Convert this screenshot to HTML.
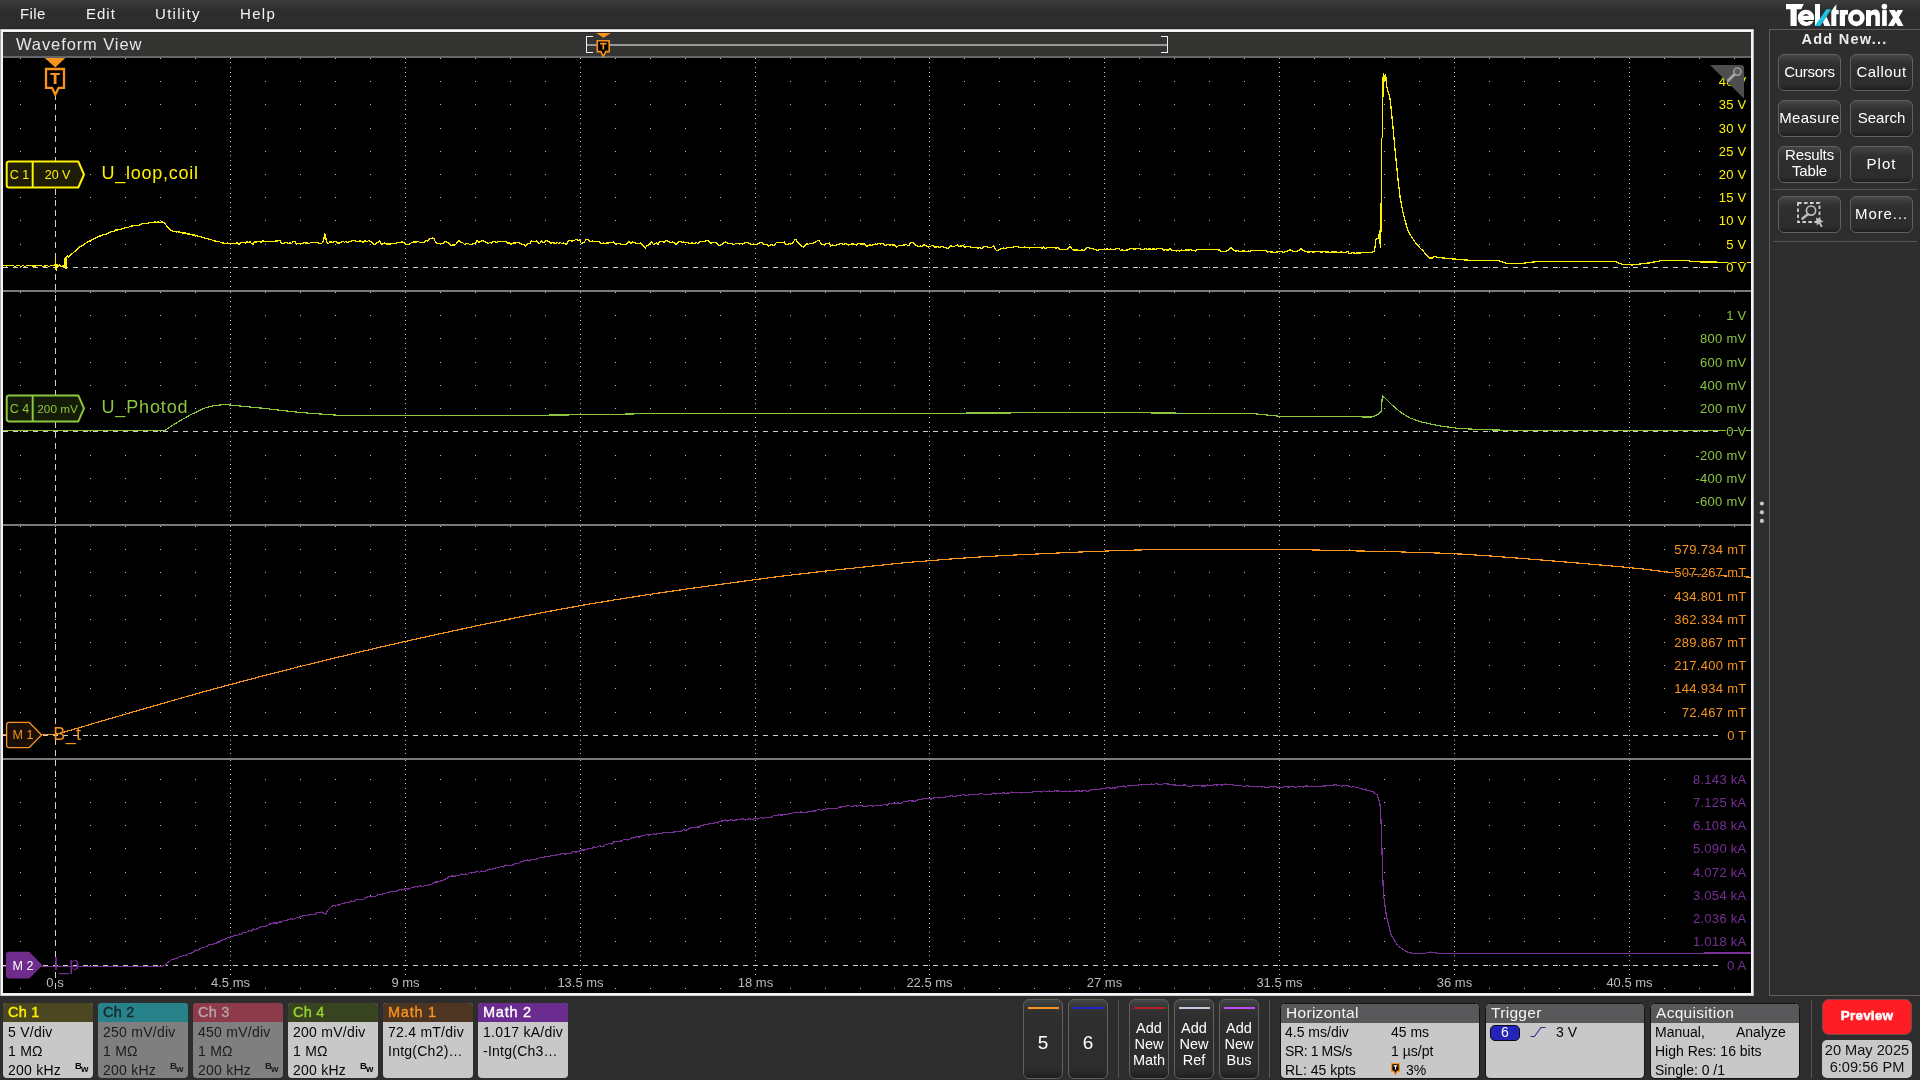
<!DOCTYPE html>
<html><head><meta charset="utf-8"><title>Scope</title>
<style>
html,body{margin:0;padding:0}
body{width:1920px;height:1080px;overflow:hidden;position:relative;background:#2d2d2d;font-family:"Liberation Sans",sans-serif;color:#fff}
.abs{position:absolute}
#menubar{left:0;top:0;width:1920px;height:28px;background:linear-gradient(#3c3c3c 0,#393939 3px,#323232 7px,#2d2d2d 11px,#2d2d2d 100%)}
#menuline{left:0;top:28px;width:1756px;height:1px;background:#232323}
.menu{top:5px;font-size:15px;line-height:18px;letter-spacing:.35px;color:#f4f4f4;white-space:nowrap}
#wvframe{left:0;top:29px;width:1754px;height:967px;background:linear-gradient(#cdcdd1 0,#cdcdd1 1px,#f4f4f6 1px,#f4f4f6 966px,#d4d4d6 966px);box-sizing:border-box;border-left:1px solid #a9a9ad;border-right:1px solid #b4b4b8}
#wvhead{left:3px;top:32px;width:1748px;height:24px;background:#343432;border-top:1px solid #292927;box-sizing:border-box}
#wvline{left:3px;top:56px;width:1748px;height:2px;background:#63666a}
#plot{left:3px;top:58px;width:1748px;height:935px;background:#000}
#wvtitle{left:16px;top:34px;font-size:16.5px;line-height:20px;letter-spacing:.9px;color:#e6e6e6;white-space:nowrap}
#svg{left:0;top:0}
/* right panel */
#rpanel{left:1769px;top:29px;width:160px;height:967px;box-sizing:border-box;border:1px solid #665d56;border-left-color:#5c6064;background:#2e2e2e}
.btn{box-sizing:border-box;border:1px solid #675e58;border-radius:6px;background:linear-gradient(#454647 0,#3b3c3c 10%,#313131 24%,#2e2e2e 40%,#2d2d2d 84%,#262626 93%,#1d1d1d 100%);color:#fff;text-align:center}
.rb{width:63px;height:37px;font-size:15px;line-height:33px;white-space:nowrap}
.sep{height:1px;background:#5b544f}
.vsep{width:1px;background:#5b544f}
/* bottom */
.badge{width:90px;height:75px;top:1003px;border-radius:4px;overflow:hidden;background:#c8c8c8;color:#050505;font-size:14px}
.badge.off{background:#7f7f7f;color:#1c1c1c}
.badge .hd{position:absolute;left:0;top:0;width:100%;height:19px;font-size:14.5px;line-height:18px;text-indent:5px;-webkit-text-stroke:.35px;letter-spacing:.2px}
.badge .r{position:absolute;left:5px;white-space:nowrap;line-height:16px;letter-spacing:.25px}
.r1{top:21px}.r2{top:40px}.r3{top:59px}
.bw{position:absolute;left:72px;top:57.5px;font-size:9.5px;line-height:10px;font-weight:bold;letter-spacing:-.9px;white-space:nowrap}
.bw span{position:relative;top:3.2px;font-size:9.5px}
.info{top:1003px;height:75.5px;box-sizing:border-box;border:1px solid #141414;border-radius:5px;overflow:hidden;background:#c8c8c8;color:#050505;font-size:14px}
.info .hd{position:absolute;left:0;top:0;width:100%;height:19px;background:#58585a;color:#f4f4f4;font-size:15.5px;line-height:18px;text-indent:5px;letter-spacing:.3px}
.info .r{position:absolute;white-space:nowrap;line-height:16px;letter-spacing:0}
.i1{top:20px}.i2{top:39px}.i3{top:58px}
.tall{top:999px;width:40px;height:79.5px;background:linear-gradient(#454647 0,#3b3c3c 5%,#313131 14%,#2e2e2e 24%,#2d2d2d 88%,#262626 95%,#1d1d1d 100%)}
.tall .ln{position:absolute;left:4px;top:7px;width:31px;height:2px}

#root{position:absolute;left:0;top:0;width:1920px;height:1080px;will-change:transform}

</style></head>
<body>
<div id="root">
<div id="menubar" class="abs"></div><div id="menuline" class="abs"></div>
<div class="abs menu" style="left:20px">File</div>
<div class="abs menu" style="left:86px;letter-spacing:1px">Edit</div>
<div class="abs menu" style="left:155px;letter-spacing:1.3px">Utility</div>
<div class="abs menu" style="left:240px;letter-spacing:1.3px">Help</div>
<svg class="abs" style="left:1780px;top:0" width="135" height="29" viewBox="1780 0 135 29">
<g fill="#fff">
<path d="M1786 4H1803.8L1801.2 9.2H1796.7V25.9H1790.5V9.2H1786Z"/>
<circle cx="1806" cy="17.9" r="8.2"/>
<rect x="1815" y="4" width="5" height="21.9"/>
<path d="M1826.4 16.5L1830.5 25.9H1824.4L1822.9 21.9Z"/>
<path d="M1836.3 4.2V10.1H1838.7V14.3H1836.3V25.9H1831.3V11Z"/>
<path d="M1839.8 10.1H1848V14.6H1846.4Q1845 14.6 1845 16V25.9H1839.8Z"/>
<path d="M1866 10H1870.6V11.2Q1872.6 9.6 1875 9.6Q1879.9 9.6 1879.9 15.2V25.9H1875.4V16.6Q1875.4 14.8 1873.2 14.8Q1871 14.8 1871 16.8V25.9H1866Z"/>
<rect x="1882.1" y="10.1" width="4.7" height="15.8"/>
<circle cx="1884.4" cy="6.6" r="2.8"/>
<path d="M1888.9 10.1H1894.9L1903.5 25.9H1897.9Z"/>
<path d="M1897.5 10.1H1903.1L1893.7 25.9H1887.9Z"/>
</g>
<circle cx="1856.35" cy="17.9" r="5.93" fill="none" stroke="#fff" stroke-width="4.75"/>
<path d="M1802.8 15.8Q1806 12.4 1809.2 15.8Z" fill="#262626"/>
<path d="M1803 20.1H1814.4V20.9H1809Q1806 23.2 1803 20.1Z" fill="#262626"/>
<path d="M1814.8 25.9H1820.3L1831 9.3H1826.3Z" fill="#1ec3e6"/>
</svg>
<div id="wvframe" class="abs"></div>
<div id="wvhead" class="abs"></div><div id="wvline" class="abs"></div>
<div id="plot" class="abs"></div>
<div id="wvtitle" class="abs">Waveform View</div>
<div id="rpanel" class="abs"></div>
<svg id="svg" class="abs" width="1920" height="1080" viewBox="0 0 1920 1080" font-family="Liberation Sans, sans-serif">
<defs><clipPath id="cp"><rect x="3" y="58" width="1748" height="935"/></clipPath></defs>
<g clip-path="url(#cp)">
<path d="M20 58.5h1M55 58.5h1M90 58.5h1M125 58.5h1M160 58.5h1M195 58.5h1M265 58.5h1M300 58.5h1M335 58.5h1M370 58.5h1M440 58.5h1M475 58.5h1M510 58.5h1M545 58.5h1M615 58.5h1M650 58.5h1M685 58.5h1M720 58.5h1M790 58.5h1M825 58.5h1M860 58.5h1M894 58.5h1M964 58.5h1M999 58.5h1M1034 58.5h1M1069 58.5h1M1139 58.5h1M1174 58.5h1M1209 58.5h1M1244 58.5h1M1314 58.5h1M1349 58.5h1M1384 58.5h1M1419 58.5h1M1489 58.5h1M1524 58.5h1M1559 58.5h1M1594 58.5h1M1664 58.5h1M1699 58.5h1M1734 58.5h1M20 81.5h1M55 81.5h1M90 81.5h1M125 81.5h1M160 81.5h1M195 81.5h1M265 81.5h1M300 81.5h1M335 81.5h1M370 81.5h1M440 81.5h1M475 81.5h1M510 81.5h1M545 81.5h1M615 81.5h1M650 81.5h1M685 81.5h1M720 81.5h1M790 81.5h1M825 81.5h1M860 81.5h1M894 81.5h1M964 81.5h1M999 81.5h1M1034 81.5h1M1069 81.5h1M1139 81.5h1M1174 81.5h1M1209 81.5h1M1244 81.5h1M1314 81.5h1M1349 81.5h1M1384 81.5h1M1419 81.5h1M1489 81.5h1M1524 81.5h1M1559 81.5h1M1594 81.5h1M1664 81.5h1M1699 81.5h1M1734 81.5h1M20 104.5h1M55 104.5h1M90 104.5h1M125 104.5h1M160 104.5h1M195 104.5h1M265 104.5h1M300 104.5h1M335 104.5h1M370 104.5h1M440 104.5h1M475 104.5h1M510 104.5h1M545 104.5h1M615 104.5h1M650 104.5h1M685 104.5h1M720 104.5h1M790 104.5h1M825 104.5h1M860 104.5h1M894 104.5h1M964 104.5h1M999 104.5h1M1034 104.5h1M1069 104.5h1M1139 104.5h1M1174 104.5h1M1209 104.5h1M1244 104.5h1M1314 104.5h1M1349 104.5h1M1384 104.5h1M1419 104.5h1M1489 104.5h1M1524 104.5h1M1559 104.5h1M1594 104.5h1M1664 104.5h1M1699 104.5h1M1734 104.5h1M20 128.5h1M55 128.5h1M90 128.5h1M125 128.5h1M160 128.5h1M195 128.5h1M265 128.5h1M300 128.5h1M335 128.5h1M370 128.5h1M440 128.5h1M475 128.5h1M510 128.5h1M545 128.5h1M615 128.5h1M650 128.5h1M685 128.5h1M720 128.5h1M790 128.5h1M825 128.5h1M860 128.5h1M894 128.5h1M964 128.5h1M999 128.5h1M1034 128.5h1M1069 128.5h1M1139 128.5h1M1174 128.5h1M1209 128.5h1M1244 128.5h1M1314 128.5h1M1349 128.5h1M1384 128.5h1M1419 128.5h1M1489 128.5h1M1524 128.5h1M1559 128.5h1M1594 128.5h1M1664 128.5h1M1699 128.5h1M1734 128.5h1M20 151.5h1M55 151.5h1M90 151.5h1M125 151.5h1M160 151.5h1M195 151.5h1M265 151.5h1M300 151.5h1M335 151.5h1M370 151.5h1M440 151.5h1M475 151.5h1M510 151.5h1M545 151.5h1M615 151.5h1M650 151.5h1M685 151.5h1M720 151.5h1M790 151.5h1M825 151.5h1M860 151.5h1M894 151.5h1M964 151.5h1M999 151.5h1M1034 151.5h1M1069 151.5h1M1139 151.5h1M1174 151.5h1M1209 151.5h1M1244 151.5h1M1314 151.5h1M1349 151.5h1M1384 151.5h1M1419 151.5h1M1489 151.5h1M1524 151.5h1M1559 151.5h1M1594 151.5h1M1664 151.5h1M1699 151.5h1M1734 151.5h1M20 174.5h1M55 174.5h1M90 174.5h1M125 174.5h1M160 174.5h1M195 174.5h1M265 174.5h1M300 174.5h1M335 174.5h1M370 174.5h1M440 174.5h1M475 174.5h1M510 174.5h1M545 174.5h1M615 174.5h1M650 174.5h1M685 174.5h1M720 174.5h1M790 174.5h1M825 174.5h1M860 174.5h1M894 174.5h1M964 174.5h1M999 174.5h1M1034 174.5h1M1069 174.5h1M1139 174.5h1M1174 174.5h1M1209 174.5h1M1244 174.5h1M1314 174.5h1M1349 174.5h1M1384 174.5h1M1419 174.5h1M1489 174.5h1M1524 174.5h1M1559 174.5h1M1594 174.5h1M1664 174.5h1M1699 174.5h1M1734 174.5h1M20 197.5h1M55 197.5h1M90 197.5h1M125 197.5h1M160 197.5h1M195 197.5h1M265 197.5h1M300 197.5h1M335 197.5h1M370 197.5h1M440 197.5h1M475 197.5h1M510 197.5h1M545 197.5h1M615 197.5h1M650 197.5h1M685 197.5h1M720 197.5h1M790 197.5h1M825 197.5h1M860 197.5h1M894 197.5h1M964 197.5h1M999 197.5h1M1034 197.5h1M1069 197.5h1M1139 197.5h1M1174 197.5h1M1209 197.5h1M1244 197.5h1M1314 197.5h1M1349 197.5h1M1384 197.5h1M1419 197.5h1M1489 197.5h1M1524 197.5h1M1559 197.5h1M1594 197.5h1M1664 197.5h1M1699 197.5h1M1734 197.5h1M20 220.5h1M55 220.5h1M90 220.5h1M125 220.5h1M160 220.5h1M195 220.5h1M265 220.5h1M300 220.5h1M335 220.5h1M370 220.5h1M440 220.5h1M475 220.5h1M510 220.5h1M545 220.5h1M615 220.5h1M650 220.5h1M685 220.5h1M720 220.5h1M790 220.5h1M825 220.5h1M860 220.5h1M894 220.5h1M964 220.5h1M999 220.5h1M1034 220.5h1M1069 220.5h1M1139 220.5h1M1174 220.5h1M1209 220.5h1M1244 220.5h1M1314 220.5h1M1349 220.5h1M1384 220.5h1M1419 220.5h1M1489 220.5h1M1524 220.5h1M1559 220.5h1M1594 220.5h1M1664 220.5h1M1699 220.5h1M1734 220.5h1M20 244.5h1M55 244.5h1M90 244.5h1M125 244.5h1M160 244.5h1M195 244.5h1M265 244.5h1M300 244.5h1M335 244.5h1M370 244.5h1M440 244.5h1M475 244.5h1M510 244.5h1M545 244.5h1M615 244.5h1M650 244.5h1M685 244.5h1M720 244.5h1M790 244.5h1M825 244.5h1M860 244.5h1M894 244.5h1M964 244.5h1M999 244.5h1M1034 244.5h1M1069 244.5h1M1139 244.5h1M1174 244.5h1M1209 244.5h1M1244 244.5h1M1314 244.5h1M1349 244.5h1M1384 244.5h1M1419 244.5h1M1489 244.5h1M1524 244.5h1M1559 244.5h1M1594 244.5h1M1664 244.5h1M1699 244.5h1M1734 244.5h1M20 267.5h1M55 267.5h1M90 267.5h1M125 267.5h1M160 267.5h1M195 267.5h1M265 267.5h1M300 267.5h1M335 267.5h1M370 267.5h1M440 267.5h1M475 267.5h1M510 267.5h1M545 267.5h1M615 267.5h1M650 267.5h1M685 267.5h1M720 267.5h1M790 267.5h1M825 267.5h1M860 267.5h1M894 267.5h1M964 267.5h1M999 267.5h1M1034 267.5h1M1069 267.5h1M1139 267.5h1M1174 267.5h1M1209 267.5h1M1244 267.5h1M1314 267.5h1M1349 267.5h1M1384 267.5h1M1419 267.5h1M1489 267.5h1M1524 267.5h1M1559 267.5h1M1594 267.5h1M1664 267.5h1M1699 267.5h1M1734 267.5h1M20 290.5h1M55 290.5h1M90 290.5h1M125 290.5h1M160 290.5h1M195 290.5h1M265 290.5h1M300 290.5h1M335 290.5h1M370 290.5h1M440 290.5h1M475 290.5h1M510 290.5h1M545 290.5h1M615 290.5h1M650 290.5h1M685 290.5h1M720 290.5h1M790 290.5h1M825 290.5h1M860 290.5h1M894 290.5h1M964 290.5h1M999 290.5h1M1034 290.5h1M1069 290.5h1M1139 290.5h1M1174 290.5h1M1209 290.5h1M1244 290.5h1M1314 290.5h1M1349 290.5h1M1384 290.5h1M1419 290.5h1M1489 290.5h1M1524 290.5h1M1559 290.5h1M1594 290.5h1M1664 290.5h1M1699 290.5h1M1734 290.5h1M20 292.5h1M55 292.5h1M90 292.5h1M125 292.5h1M160 292.5h1M195 292.5h1M265 292.5h1M300 292.5h1M335 292.5h1M370 292.5h1M440 292.5h1M475 292.5h1M510 292.5h1M545 292.5h1M615 292.5h1M650 292.5h1M685 292.5h1M720 292.5h1M790 292.5h1M825 292.5h1M860 292.5h1M894 292.5h1M964 292.5h1M999 292.5h1M1034 292.5h1M1069 292.5h1M1139 292.5h1M1174 292.5h1M1209 292.5h1M1244 292.5h1M1314 292.5h1M1349 292.5h1M1384 292.5h1M1419 292.5h1M1489 292.5h1M1524 292.5h1M1559 292.5h1M1594 292.5h1M1664 292.5h1M1699 292.5h1M1734 292.5h1M20 315.5h1M55 315.5h1M90 315.5h1M125 315.5h1M160 315.5h1M195 315.5h1M265 315.5h1M300 315.5h1M335 315.5h1M370 315.5h1M440 315.5h1M475 315.5h1M510 315.5h1M545 315.5h1M615 315.5h1M650 315.5h1M685 315.5h1M720 315.5h1M790 315.5h1M825 315.5h1M860 315.5h1M894 315.5h1M964 315.5h1M999 315.5h1M1034 315.5h1M1069 315.5h1M1139 315.5h1M1174 315.5h1M1209 315.5h1M1244 315.5h1M1314 315.5h1M1349 315.5h1M1384 315.5h1M1419 315.5h1M1489 315.5h1M1524 315.5h1M1559 315.5h1M1594 315.5h1M1664 315.5h1M1699 315.5h1M1734 315.5h1M20 338.5h1M55 338.5h1M90 338.5h1M125 338.5h1M160 338.5h1M195 338.5h1M265 338.5h1M300 338.5h1M335 338.5h1M370 338.5h1M440 338.5h1M475 338.5h1M510 338.5h1M545 338.5h1M615 338.5h1M650 338.5h1M685 338.5h1M720 338.5h1M790 338.5h1M825 338.5h1M860 338.5h1M894 338.5h1M964 338.5h1M999 338.5h1M1034 338.5h1M1069 338.5h1M1139 338.5h1M1174 338.5h1M1209 338.5h1M1244 338.5h1M1314 338.5h1M1349 338.5h1M1384 338.5h1M1419 338.5h1M1489 338.5h1M1524 338.5h1M1559 338.5h1M1594 338.5h1M1664 338.5h1M1699 338.5h1M1734 338.5h1M20 362.5h1M55 362.5h1M90 362.5h1M125 362.5h1M160 362.5h1M195 362.5h1M265 362.5h1M300 362.5h1M335 362.5h1M370 362.5h1M440 362.5h1M475 362.5h1M510 362.5h1M545 362.5h1M615 362.5h1M650 362.5h1M685 362.5h1M720 362.5h1M790 362.5h1M825 362.5h1M860 362.5h1M894 362.5h1M964 362.5h1M999 362.5h1M1034 362.5h1M1069 362.5h1M1139 362.5h1M1174 362.5h1M1209 362.5h1M1244 362.5h1M1314 362.5h1M1349 362.5h1M1384 362.5h1M1419 362.5h1M1489 362.5h1M1524 362.5h1M1559 362.5h1M1594 362.5h1M1664 362.5h1M1699 362.5h1M1734 362.5h1M20 385.5h1M55 385.5h1M90 385.5h1M125 385.5h1M160 385.5h1M195 385.5h1M265 385.5h1M300 385.5h1M335 385.5h1M370 385.5h1M440 385.5h1M475 385.5h1M510 385.5h1M545 385.5h1M615 385.5h1M650 385.5h1M685 385.5h1M720 385.5h1M790 385.5h1M825 385.5h1M860 385.5h1M894 385.5h1M964 385.5h1M999 385.5h1M1034 385.5h1M1069 385.5h1M1139 385.5h1M1174 385.5h1M1209 385.5h1M1244 385.5h1M1314 385.5h1M1349 385.5h1M1384 385.5h1M1419 385.5h1M1489 385.5h1M1524 385.5h1M1559 385.5h1M1594 385.5h1M1664 385.5h1M1699 385.5h1M1734 385.5h1M20 408.5h1M55 408.5h1M90 408.5h1M125 408.5h1M160 408.5h1M195 408.5h1M265 408.5h1M300 408.5h1M335 408.5h1M370 408.5h1M440 408.5h1M475 408.5h1M510 408.5h1M545 408.5h1M615 408.5h1M650 408.5h1M685 408.5h1M720 408.5h1M790 408.5h1M825 408.5h1M860 408.5h1M894 408.5h1M964 408.5h1M999 408.5h1M1034 408.5h1M1069 408.5h1M1139 408.5h1M1174 408.5h1M1209 408.5h1M1244 408.5h1M1314 408.5h1M1349 408.5h1M1384 408.5h1M1419 408.5h1M1489 408.5h1M1524 408.5h1M1559 408.5h1M1594 408.5h1M1664 408.5h1M1699 408.5h1M1734 408.5h1M20 431.5h1M55 431.5h1M90 431.5h1M125 431.5h1M160 431.5h1M195 431.5h1M265 431.5h1M300 431.5h1M335 431.5h1M370 431.5h1M440 431.5h1M475 431.5h1M510 431.5h1M545 431.5h1M615 431.5h1M650 431.5h1M685 431.5h1M720 431.5h1M790 431.5h1M825 431.5h1M860 431.5h1M894 431.5h1M964 431.5h1M999 431.5h1M1034 431.5h1M1069 431.5h1M1139 431.5h1M1174 431.5h1M1209 431.5h1M1244 431.5h1M1314 431.5h1M1349 431.5h1M1384 431.5h1M1419 431.5h1M1489 431.5h1M1524 431.5h1M1559 431.5h1M1594 431.5h1M1664 431.5h1M1699 431.5h1M1734 431.5h1M20 455.5h1M55 455.5h1M90 455.5h1M125 455.5h1M160 455.5h1M195 455.5h1M265 455.5h1M300 455.5h1M335 455.5h1M370 455.5h1M440 455.5h1M475 455.5h1M510 455.5h1M545 455.5h1M615 455.5h1M650 455.5h1M685 455.5h1M720 455.5h1M790 455.5h1M825 455.5h1M860 455.5h1M894 455.5h1M964 455.5h1M999 455.5h1M1034 455.5h1M1069 455.5h1M1139 455.5h1M1174 455.5h1M1209 455.5h1M1244 455.5h1M1314 455.5h1M1349 455.5h1M1384 455.5h1M1419 455.5h1M1489 455.5h1M1524 455.5h1M1559 455.5h1M1594 455.5h1M1664 455.5h1M1699 455.5h1M1734 455.5h1M20 478.5h1M55 478.5h1M90 478.5h1M125 478.5h1M160 478.5h1M195 478.5h1M265 478.5h1M300 478.5h1M335 478.5h1M370 478.5h1M440 478.5h1M475 478.5h1M510 478.5h1M545 478.5h1M615 478.5h1M650 478.5h1M685 478.5h1M720 478.5h1M790 478.5h1M825 478.5h1M860 478.5h1M894 478.5h1M964 478.5h1M999 478.5h1M1034 478.5h1M1069 478.5h1M1139 478.5h1M1174 478.5h1M1209 478.5h1M1244 478.5h1M1314 478.5h1M1349 478.5h1M1384 478.5h1M1419 478.5h1M1489 478.5h1M1524 478.5h1M1559 478.5h1M1594 478.5h1M1664 478.5h1M1699 478.5h1M1734 478.5h1M20 501.5h1M55 501.5h1M90 501.5h1M125 501.5h1M160 501.5h1M195 501.5h1M265 501.5h1M300 501.5h1M335 501.5h1M370 501.5h1M440 501.5h1M475 501.5h1M510 501.5h1M545 501.5h1M615 501.5h1M650 501.5h1M685 501.5h1M720 501.5h1M790 501.5h1M825 501.5h1M860 501.5h1M894 501.5h1M964 501.5h1M999 501.5h1M1034 501.5h1M1069 501.5h1M1139 501.5h1M1174 501.5h1M1209 501.5h1M1244 501.5h1M1314 501.5h1M1349 501.5h1M1384 501.5h1M1419 501.5h1M1489 501.5h1M1524 501.5h1M1559 501.5h1M1594 501.5h1M1664 501.5h1M1699 501.5h1M1734 501.5h1M20 524.5h1M55 524.5h1M90 524.5h1M125 524.5h1M160 524.5h1M195 524.5h1M265 524.5h1M300 524.5h1M335 524.5h1M370 524.5h1M440 524.5h1M475 524.5h1M510 524.5h1M545 524.5h1M615 524.5h1M650 524.5h1M685 524.5h1M720 524.5h1M790 524.5h1M825 524.5h1M860 524.5h1M894 524.5h1M964 524.5h1M999 524.5h1M1034 524.5h1M1069 524.5h1M1139 524.5h1M1174 524.5h1M1209 524.5h1M1244 524.5h1M1314 524.5h1M1349 524.5h1M1384 524.5h1M1419 524.5h1M1489 524.5h1M1524 524.5h1M1559 524.5h1M1594 524.5h1M1664 524.5h1M1699 524.5h1M1734 524.5h1M20 526.5h1M55 526.5h1M90 526.5h1M125 526.5h1M160 526.5h1M195 526.5h1M265 526.5h1M300 526.5h1M335 526.5h1M370 526.5h1M440 526.5h1M475 526.5h1M510 526.5h1M545 526.5h1M615 526.5h1M650 526.5h1M685 526.5h1M720 526.5h1M790 526.5h1M825 526.5h1M860 526.5h1M894 526.5h1M964 526.5h1M999 526.5h1M1034 526.5h1M1069 526.5h1M1139 526.5h1M1174 526.5h1M1209 526.5h1M1244 526.5h1M1314 526.5h1M1349 526.5h1M1384 526.5h1M1419 526.5h1M1489 526.5h1M1524 526.5h1M1559 526.5h1M1594 526.5h1M1664 526.5h1M1699 526.5h1M1734 526.5h1M20 549.5h1M55 549.5h1M90 549.5h1M125 549.5h1M160 549.5h1M195 549.5h1M265 549.5h1M300 549.5h1M335 549.5h1M370 549.5h1M440 549.5h1M475 549.5h1M510 549.5h1M545 549.5h1M615 549.5h1M650 549.5h1M685 549.5h1M720 549.5h1M790 549.5h1M825 549.5h1M860 549.5h1M894 549.5h1M964 549.5h1M999 549.5h1M1034 549.5h1M1069 549.5h1M1139 549.5h1M1174 549.5h1M1209 549.5h1M1244 549.5h1M1314 549.5h1M1349 549.5h1M1384 549.5h1M1419 549.5h1M1489 549.5h1M1524 549.5h1M1559 549.5h1M1594 549.5h1M1664 549.5h1M1699 549.5h1M1734 549.5h1M20 572.5h1M55 572.5h1M90 572.5h1M125 572.5h1M160 572.5h1M195 572.5h1M265 572.5h1M300 572.5h1M335 572.5h1M370 572.5h1M440 572.5h1M475 572.5h1M510 572.5h1M545 572.5h1M615 572.5h1M650 572.5h1M685 572.5h1M720 572.5h1M790 572.5h1M825 572.5h1M860 572.5h1M894 572.5h1M964 572.5h1M999 572.5h1M1034 572.5h1M1069 572.5h1M1139 572.5h1M1174 572.5h1M1209 572.5h1M1244 572.5h1M1314 572.5h1M1349 572.5h1M1384 572.5h1M1419 572.5h1M1489 572.5h1M1524 572.5h1M1559 572.5h1M1594 572.5h1M1664 572.5h1M1699 572.5h1M1734 572.5h1M20 595.5h1M55 595.5h1M90 595.5h1M125 595.5h1M160 595.5h1M195 595.5h1M265 595.5h1M300 595.5h1M335 595.5h1M370 595.5h1M440 595.5h1M475 595.5h1M510 595.5h1M545 595.5h1M615 595.5h1M650 595.5h1M685 595.5h1M720 595.5h1M790 595.5h1M825 595.5h1M860 595.5h1M894 595.5h1M964 595.5h1M999 595.5h1M1034 595.5h1M1069 595.5h1M1139 595.5h1M1174 595.5h1M1209 595.5h1M1244 595.5h1M1314 595.5h1M1349 595.5h1M1384 595.5h1M1419 595.5h1M1489 595.5h1M1524 595.5h1M1559 595.5h1M1594 595.5h1M1664 595.5h1M1699 595.5h1M1734 595.5h1M20 619.5h1M55 619.5h1M90 619.5h1M125 619.5h1M160 619.5h1M195 619.5h1M265 619.5h1M300 619.5h1M335 619.5h1M370 619.5h1M440 619.5h1M475 619.5h1M510 619.5h1M545 619.5h1M615 619.5h1M650 619.5h1M685 619.5h1M720 619.5h1M790 619.5h1M825 619.5h1M860 619.5h1M894 619.5h1M964 619.5h1M999 619.5h1M1034 619.5h1M1069 619.5h1M1139 619.5h1M1174 619.5h1M1209 619.5h1M1244 619.5h1M1314 619.5h1M1349 619.5h1M1384 619.5h1M1419 619.5h1M1489 619.5h1M1524 619.5h1M1559 619.5h1M1594 619.5h1M1664 619.5h1M1699 619.5h1M1734 619.5h1M20 642.5h1M55 642.5h1M90 642.5h1M125 642.5h1M160 642.5h1M195 642.5h1M265 642.5h1M300 642.5h1M335 642.5h1M370 642.5h1M440 642.5h1M475 642.5h1M510 642.5h1M545 642.5h1M615 642.5h1M650 642.5h1M685 642.5h1M720 642.5h1M790 642.5h1M825 642.5h1M860 642.5h1M894 642.5h1M964 642.5h1M999 642.5h1M1034 642.5h1M1069 642.5h1M1139 642.5h1M1174 642.5h1M1209 642.5h1M1244 642.5h1M1314 642.5h1M1349 642.5h1M1384 642.5h1M1419 642.5h1M1489 642.5h1M1524 642.5h1M1559 642.5h1M1594 642.5h1M1664 642.5h1M1699 642.5h1M1734 642.5h1M20 665.5h1M55 665.5h1M90 665.5h1M125 665.5h1M160 665.5h1M195 665.5h1M265 665.5h1M300 665.5h1M335 665.5h1M370 665.5h1M440 665.5h1M475 665.5h1M510 665.5h1M545 665.5h1M615 665.5h1M650 665.5h1M685 665.5h1M720 665.5h1M790 665.5h1M825 665.5h1M860 665.5h1M894 665.5h1M964 665.5h1M999 665.5h1M1034 665.5h1M1069 665.5h1M1139 665.5h1M1174 665.5h1M1209 665.5h1M1244 665.5h1M1314 665.5h1M1349 665.5h1M1384 665.5h1M1419 665.5h1M1489 665.5h1M1524 665.5h1M1559 665.5h1M1594 665.5h1M1664 665.5h1M1699 665.5h1M1734 665.5h1M20 688.5h1M55 688.5h1M90 688.5h1M125 688.5h1M160 688.5h1M195 688.5h1M265 688.5h1M300 688.5h1M335 688.5h1M370 688.5h1M440 688.5h1M475 688.5h1M510 688.5h1M545 688.5h1M615 688.5h1M650 688.5h1M685 688.5h1M720 688.5h1M790 688.5h1M825 688.5h1M860 688.5h1M894 688.5h1M964 688.5h1M999 688.5h1M1034 688.5h1M1069 688.5h1M1139 688.5h1M1174 688.5h1M1209 688.5h1M1244 688.5h1M1314 688.5h1M1349 688.5h1M1384 688.5h1M1419 688.5h1M1489 688.5h1M1524 688.5h1M1559 688.5h1M1594 688.5h1M1664 688.5h1M1699 688.5h1M1734 688.5h1M20 712.5h1M55 712.5h1M90 712.5h1M125 712.5h1M160 712.5h1M195 712.5h1M265 712.5h1M300 712.5h1M335 712.5h1M370 712.5h1M440 712.5h1M475 712.5h1M510 712.5h1M545 712.5h1M615 712.5h1M650 712.5h1M685 712.5h1M720 712.5h1M790 712.5h1M825 712.5h1M860 712.5h1M894 712.5h1M964 712.5h1M999 712.5h1M1034 712.5h1M1069 712.5h1M1139 712.5h1M1174 712.5h1M1209 712.5h1M1244 712.5h1M1314 712.5h1M1349 712.5h1M1384 712.5h1M1419 712.5h1M1489 712.5h1M1524 712.5h1M1559 712.5h1M1594 712.5h1M1664 712.5h1M1699 712.5h1M1734 712.5h1M20 735.5h1M55 735.5h1M90 735.5h1M125 735.5h1M160 735.5h1M195 735.5h1M265 735.5h1M300 735.5h1M335 735.5h1M370 735.5h1M440 735.5h1M475 735.5h1M510 735.5h1M545 735.5h1M615 735.5h1M650 735.5h1M685 735.5h1M720 735.5h1M790 735.5h1M825 735.5h1M860 735.5h1M894 735.5h1M964 735.5h1M999 735.5h1M1034 735.5h1M1069 735.5h1M1139 735.5h1M1174 735.5h1M1209 735.5h1M1244 735.5h1M1314 735.5h1M1349 735.5h1M1384 735.5h1M1419 735.5h1M1489 735.5h1M1524 735.5h1M1559 735.5h1M1594 735.5h1M1664 735.5h1M1699 735.5h1M1734 735.5h1M20 758.5h1M55 758.5h1M90 758.5h1M125 758.5h1M160 758.5h1M195 758.5h1M265 758.5h1M300 758.5h1M335 758.5h1M370 758.5h1M440 758.5h1M475 758.5h1M510 758.5h1M545 758.5h1M615 758.5h1M650 758.5h1M685 758.5h1M720 758.5h1M790 758.5h1M825 758.5h1M860 758.5h1M894 758.5h1M964 758.5h1M999 758.5h1M1034 758.5h1M1069 758.5h1M1139 758.5h1M1174 758.5h1M1209 758.5h1M1244 758.5h1M1314 758.5h1M1349 758.5h1M1384 758.5h1M1419 758.5h1M1489 758.5h1M1524 758.5h1M1559 758.5h1M1594 758.5h1M1664 758.5h1M1699 758.5h1M1734 758.5h1M20 779.5h1M55 779.5h1M90 779.5h1M125 779.5h1M160 779.5h1M195 779.5h1M265 779.5h1M300 779.5h1M335 779.5h1M370 779.5h1M440 779.5h1M475 779.5h1M510 779.5h1M545 779.5h1M615 779.5h1M650 779.5h1M685 779.5h1M720 779.5h1M790 779.5h1M825 779.5h1M860 779.5h1M894 779.5h1M964 779.5h1M999 779.5h1M1034 779.5h1M1069 779.5h1M1139 779.5h1M1174 779.5h1M1209 779.5h1M1244 779.5h1M1314 779.5h1M1349 779.5h1M1384 779.5h1M1419 779.5h1M1489 779.5h1M1524 779.5h1M1559 779.5h1M1594 779.5h1M1664 779.5h1M1699 779.5h1M1734 779.5h1M20 802.5h1M55 802.5h1M90 802.5h1M125 802.5h1M160 802.5h1M195 802.5h1M265 802.5h1M300 802.5h1M335 802.5h1M370 802.5h1M440 802.5h1M475 802.5h1M510 802.5h1M545 802.5h1M615 802.5h1M650 802.5h1M685 802.5h1M720 802.5h1M790 802.5h1M825 802.5h1M860 802.5h1M894 802.5h1M964 802.5h1M999 802.5h1M1034 802.5h1M1069 802.5h1M1139 802.5h1M1174 802.5h1M1209 802.5h1M1244 802.5h1M1314 802.5h1M1349 802.5h1M1384 802.5h1M1419 802.5h1M1489 802.5h1M1524 802.5h1M1559 802.5h1M1594 802.5h1M1664 802.5h1M1699 802.5h1M1734 802.5h1M20 825.5h1M55 825.5h1M90 825.5h1M125 825.5h1M160 825.5h1M195 825.5h1M265 825.5h1M300 825.5h1M335 825.5h1M370 825.5h1M440 825.5h1M475 825.5h1M510 825.5h1M545 825.5h1M615 825.5h1M650 825.5h1M685 825.5h1M720 825.5h1M790 825.5h1M825 825.5h1M860 825.5h1M894 825.5h1M964 825.5h1M999 825.5h1M1034 825.5h1M1069 825.5h1M1139 825.5h1M1174 825.5h1M1209 825.5h1M1244 825.5h1M1314 825.5h1M1349 825.5h1M1384 825.5h1M1419 825.5h1M1489 825.5h1M1524 825.5h1M1559 825.5h1M1594 825.5h1M1664 825.5h1M1699 825.5h1M1734 825.5h1M20 848.5h1M55 848.5h1M90 848.5h1M125 848.5h1M160 848.5h1M195 848.5h1M265 848.5h1M300 848.5h1M335 848.5h1M370 848.5h1M440 848.5h1M475 848.5h1M510 848.5h1M545 848.5h1M615 848.5h1M650 848.5h1M685 848.5h1M720 848.5h1M790 848.5h1M825 848.5h1M860 848.5h1M894 848.5h1M964 848.5h1M999 848.5h1M1034 848.5h1M1069 848.5h1M1139 848.5h1M1174 848.5h1M1209 848.5h1M1244 848.5h1M1314 848.5h1M1349 848.5h1M1384 848.5h1M1419 848.5h1M1489 848.5h1M1524 848.5h1M1559 848.5h1M1594 848.5h1M1664 848.5h1M1699 848.5h1M1734 848.5h1M20 872.5h1M55 872.5h1M90 872.5h1M125 872.5h1M160 872.5h1M195 872.5h1M265 872.5h1M300 872.5h1M335 872.5h1M370 872.5h1M440 872.5h1M475 872.5h1M510 872.5h1M545 872.5h1M615 872.5h1M650 872.5h1M685 872.5h1M720 872.5h1M790 872.5h1M825 872.5h1M860 872.5h1M894 872.5h1M964 872.5h1M999 872.5h1M1034 872.5h1M1069 872.5h1M1139 872.5h1M1174 872.5h1M1209 872.5h1M1244 872.5h1M1314 872.5h1M1349 872.5h1M1384 872.5h1M1419 872.5h1M1489 872.5h1M1524 872.5h1M1559 872.5h1M1594 872.5h1M1664 872.5h1M1699 872.5h1M1734 872.5h1M20 895.5h1M55 895.5h1M90 895.5h1M125 895.5h1M160 895.5h1M195 895.5h1M265 895.5h1M300 895.5h1M335 895.5h1M370 895.5h1M440 895.5h1M475 895.5h1M510 895.5h1M545 895.5h1M615 895.5h1M650 895.5h1M685 895.5h1M720 895.5h1M790 895.5h1M825 895.5h1M860 895.5h1M894 895.5h1M964 895.5h1M999 895.5h1M1034 895.5h1M1069 895.5h1M1139 895.5h1M1174 895.5h1M1209 895.5h1M1244 895.5h1M1314 895.5h1M1349 895.5h1M1384 895.5h1M1419 895.5h1M1489 895.5h1M1524 895.5h1M1559 895.5h1M1594 895.5h1M1664 895.5h1M1699 895.5h1M1734 895.5h1M20 918.5h1M55 918.5h1M90 918.5h1M125 918.5h1M160 918.5h1M195 918.5h1M265 918.5h1M300 918.5h1M335 918.5h1M370 918.5h1M440 918.5h1M475 918.5h1M510 918.5h1M545 918.5h1M615 918.5h1M650 918.5h1M685 918.5h1M720 918.5h1M790 918.5h1M825 918.5h1M860 918.5h1M894 918.5h1M964 918.5h1M999 918.5h1M1034 918.5h1M1069 918.5h1M1139 918.5h1M1174 918.5h1M1209 918.5h1M1244 918.5h1M1314 918.5h1M1349 918.5h1M1384 918.5h1M1419 918.5h1M1489 918.5h1M1524 918.5h1M1559 918.5h1M1594 918.5h1M1664 918.5h1M1699 918.5h1M1734 918.5h1M20 941.5h1M55 941.5h1M90 941.5h1M125 941.5h1M160 941.5h1M195 941.5h1M265 941.5h1M300 941.5h1M335 941.5h1M370 941.5h1M440 941.5h1M475 941.5h1M510 941.5h1M545 941.5h1M615 941.5h1M650 941.5h1M685 941.5h1M720 941.5h1M790 941.5h1M825 941.5h1M860 941.5h1M894 941.5h1M964 941.5h1M999 941.5h1M1034 941.5h1M1069 941.5h1M1139 941.5h1M1174 941.5h1M1209 941.5h1M1244 941.5h1M1314 941.5h1M1349 941.5h1M1384 941.5h1M1419 941.5h1M1489 941.5h1M1524 941.5h1M1559 941.5h1M1594 941.5h1M1664 941.5h1M1699 941.5h1M1734 941.5h1M20 965.5h1M55 965.5h1M90 965.5h1M125 965.5h1M160 965.5h1M195 965.5h1M265 965.5h1M300 965.5h1M335 965.5h1M370 965.5h1M440 965.5h1M475 965.5h1M510 965.5h1M545 965.5h1M615 965.5h1M650 965.5h1M685 965.5h1M720 965.5h1M790 965.5h1M825 965.5h1M860 965.5h1M894 965.5h1M964 965.5h1M999 965.5h1M1034 965.5h1M1069 965.5h1M1139 965.5h1M1174 965.5h1M1209 965.5h1M1244 965.5h1M1314 965.5h1M1349 965.5h1M1384 965.5h1M1419 965.5h1M1489 965.5h1M1524 965.5h1M1559 965.5h1M1594 965.5h1M1664 965.5h1M1699 965.5h1M1734 965.5h1M20 988.5h1M55 988.5h1M90 988.5h1M125 988.5h1M160 988.5h1M195 988.5h1M265 988.5h1M300 988.5h1M335 988.5h1M370 988.5h1M440 988.5h1M475 988.5h1M510 988.5h1M545 988.5h1M615 988.5h1M650 988.5h1M685 988.5h1M720 988.5h1M790 988.5h1M825 988.5h1M860 988.5h1M894 988.5h1M964 988.5h1M999 988.5h1M1034 988.5h1M1069 988.5h1M1139 988.5h1M1174 988.5h1M1209 988.5h1M1244 988.5h1M1314 988.5h1M1349 988.5h1M1384 988.5h1M1419 988.5h1M1489 988.5h1M1524 988.5h1M1559 988.5h1M1594 988.5h1M1664 988.5h1M1699 988.5h1M1734 988.5h1M230 58.5h1M230 62.5h1M230 67.5h1M230 72.5h1M230 76.5h1M230 81.5h1M230 86.5h1M230 90.5h1M230 95.5h1M230 100.5h1M230 104.5h1M230 109.5h1M230 114.5h1M230 118.5h1M230 123.5h1M230 128.5h1M230 132.5h1M230 137.5h1M230 141.5h1M230 146.5h1M230 151.5h1M230 155.5h1M230 160.5h1M230 165.5h1M230 169.5h1M230 174.5h1M230 179.5h1M230 183.5h1M230 188.5h1M230 193.5h1M230 197.5h1M230 202.5h1M230 207.5h1M230 211.5h1M230 216.5h1M230 220.5h1M230 225.5h1M230 230.5h1M230 234.5h1M230 239.5h1M230 244.5h1M230 248.5h1M230 253.5h1M230 258.5h1M230 262.5h1M230 267.5h1M230 272.5h1M230 276.5h1M230 281.5h1M230 286.5h1M230 290.5h1M230 292.5h1M230 297.5h1M230 301.5h1M230 306.5h1M230 311.5h1M230 315.5h1M230 320.5h1M230 324.5h1M230 329.5h1M230 334.5h1M230 338.5h1M230 343.5h1M230 348.5h1M230 352.5h1M230 357.5h1M230 362.5h1M230 366.5h1M230 371.5h1M230 376.5h1M230 380.5h1M230 385.5h1M230 390.5h1M230 394.5h1M230 399.5h1M230 403.5h1M230 408.5h1M230 413.5h1M230 417.5h1M230 422.5h1M230 427.5h1M230 431.5h1M230 436.5h1M230 441.5h1M230 445.5h1M230 450.5h1M230 455.5h1M230 459.5h1M230 464.5h1M230 468.5h1M230 473.5h1M230 478.5h1M230 482.5h1M230 487.5h1M230 492.5h1M230 496.5h1M230 501.5h1M230 506.5h1M230 510.5h1M230 515.5h1M230 520.5h1M230 524.5h1M230 526.5h1M230 530.5h1M230 535.5h1M230 540.5h1M230 544.5h1M230 549.5h1M230 554.5h1M230 558.5h1M230 563.5h1M230 568.5h1M230 572.5h1M230 577.5h1M230 582.5h1M230 586.5h1M230 591.5h1M230 595.5h1M230 600.5h1M230 605.5h1M230 609.5h1M230 614.5h1M230 619.5h1M230 623.5h1M230 628.5h1M230 633.5h1M230 637.5h1M230 642.5h1M230 647.5h1M230 651.5h1M230 656.5h1M230 661.5h1M230 665.5h1M230 670.5h1M230 674.5h1M230 679.5h1M230 684.5h1M230 688.5h1M230 693.5h1M230 698.5h1M230 702.5h1M230 707.5h1M230 712.5h1M230 716.5h1M230 721.5h1M230 726.5h1M230 730.5h1M230 735.5h1M230 740.5h1M230 744.5h1M230 749.5h1M230 753.5h1M230 760.5h1M230 765.5h1M230 769.5h1M230 774.5h1M230 779.5h1M230 783.5h1M230 788.5h1M230 793.5h1M230 797.5h1M230 802.5h1M230 806.5h1M230 811.5h1M230 816.5h1M230 820.5h1M230 825.5h1M230 830.5h1M230 834.5h1M230 839.5h1M230 844.5h1M230 848.5h1M230 853.5h1M230 858.5h1M230 862.5h1M230 867.5h1M230 872.5h1M230 876.5h1M230 881.5h1M230 886.5h1M230 890.5h1M230 895.5h1M230 899.5h1M230 904.5h1M230 909.5h1M230 913.5h1M230 918.5h1M230 923.5h1M230 927.5h1M230 932.5h1M230 937.5h1M230 941.5h1M230 946.5h1M230 951.5h1M230 955.5h1M230 960.5h1M230 965.5h1M230 969.5h1M230 974.5h1M230 978.5h1M230 983.5h1M230 988.5h1M405 58.5h1M405 62.5h1M405 67.5h1M405 72.5h1M405 76.5h1M405 81.5h1M405 86.5h1M405 90.5h1M405 95.5h1M405 100.5h1M405 104.5h1M405 109.5h1M405 114.5h1M405 118.5h1M405 123.5h1M405 128.5h1M405 132.5h1M405 137.5h1M405 141.5h1M405 146.5h1M405 151.5h1M405 155.5h1M405 160.5h1M405 165.5h1M405 169.5h1M405 174.5h1M405 179.5h1M405 183.5h1M405 188.5h1M405 193.5h1M405 197.5h1M405 202.5h1M405 207.5h1M405 211.5h1M405 216.5h1M405 220.5h1M405 225.5h1M405 230.5h1M405 234.5h1M405 239.5h1M405 244.5h1M405 248.5h1M405 253.5h1M405 258.5h1M405 262.5h1M405 267.5h1M405 272.5h1M405 276.5h1M405 281.5h1M405 286.5h1M405 290.5h1M405 292.5h1M405 297.5h1M405 301.5h1M405 306.5h1M405 311.5h1M405 315.5h1M405 320.5h1M405 324.5h1M405 329.5h1M405 334.5h1M405 338.5h1M405 343.5h1M405 348.5h1M405 352.5h1M405 357.5h1M405 362.5h1M405 366.5h1M405 371.5h1M405 376.5h1M405 380.5h1M405 385.5h1M405 390.5h1M405 394.5h1M405 399.5h1M405 403.5h1M405 408.5h1M405 413.5h1M405 417.5h1M405 422.5h1M405 427.5h1M405 431.5h1M405 436.5h1M405 441.5h1M405 445.5h1M405 450.5h1M405 455.5h1M405 459.5h1M405 464.5h1M405 468.5h1M405 473.5h1M405 478.5h1M405 482.5h1M405 487.5h1M405 492.5h1M405 496.5h1M405 501.5h1M405 506.5h1M405 510.5h1M405 515.5h1M405 520.5h1M405 524.5h1M405 526.5h1M405 530.5h1M405 535.5h1M405 540.5h1M405 544.5h1M405 549.5h1M405 554.5h1M405 558.5h1M405 563.5h1M405 568.5h1M405 572.5h1M405 577.5h1M405 582.5h1M405 586.5h1M405 591.5h1M405 595.5h1M405 600.5h1M405 605.5h1M405 609.5h1M405 614.5h1M405 619.5h1M405 623.5h1M405 628.5h1M405 633.5h1M405 637.5h1M405 642.5h1M405 647.5h1M405 651.5h1M405 656.5h1M405 661.5h1M405 665.5h1M405 670.5h1M405 674.5h1M405 679.5h1M405 684.5h1M405 688.5h1M405 693.5h1M405 698.5h1M405 702.5h1M405 707.5h1M405 712.5h1M405 716.5h1M405 721.5h1M405 726.5h1M405 730.5h1M405 735.5h1M405 740.5h1M405 744.5h1M405 749.5h1M405 753.5h1M405 760.5h1M405 765.5h1M405 769.5h1M405 774.5h1M405 779.5h1M405 783.5h1M405 788.5h1M405 793.5h1M405 797.5h1M405 802.5h1M405 806.5h1M405 811.5h1M405 816.5h1M405 820.5h1M405 825.5h1M405 830.5h1M405 834.5h1M405 839.5h1M405 844.5h1M405 848.5h1M405 853.5h1M405 858.5h1M405 862.5h1M405 867.5h1M405 872.5h1M405 876.5h1M405 881.5h1M405 886.5h1M405 890.5h1M405 895.5h1M405 899.5h1M405 904.5h1M405 909.5h1M405 913.5h1M405 918.5h1M405 923.5h1M405 927.5h1M405 932.5h1M405 937.5h1M405 941.5h1M405 946.5h1M405 951.5h1M405 955.5h1M405 960.5h1M405 965.5h1M405 969.5h1M405 974.5h1M405 978.5h1M405 983.5h1M405 988.5h1M580 58.5h1M580 62.5h1M580 67.5h1M580 72.5h1M580 76.5h1M580 81.5h1M580 86.5h1M580 90.5h1M580 95.5h1M580 100.5h1M580 104.5h1M580 109.5h1M580 114.5h1M580 118.5h1M580 123.5h1M580 128.5h1M580 132.5h1M580 137.5h1M580 141.5h1M580 146.5h1M580 151.5h1M580 155.5h1M580 160.5h1M580 165.5h1M580 169.5h1M580 174.5h1M580 179.5h1M580 183.5h1M580 188.5h1M580 193.5h1M580 197.5h1M580 202.5h1M580 207.5h1M580 211.5h1M580 216.5h1M580 220.5h1M580 225.5h1M580 230.5h1M580 234.5h1M580 239.5h1M580 244.5h1M580 248.5h1M580 253.5h1M580 258.5h1M580 262.5h1M580 267.5h1M580 272.5h1M580 276.5h1M580 281.5h1M580 286.5h1M580 290.5h1M580 292.5h1M580 297.5h1M580 301.5h1M580 306.5h1M580 311.5h1M580 315.5h1M580 320.5h1M580 324.5h1M580 329.5h1M580 334.5h1M580 338.5h1M580 343.5h1M580 348.5h1M580 352.5h1M580 357.5h1M580 362.5h1M580 366.5h1M580 371.5h1M580 376.5h1M580 380.5h1M580 385.5h1M580 390.5h1M580 394.5h1M580 399.5h1M580 403.5h1M580 408.5h1M580 413.5h1M580 417.5h1M580 422.5h1M580 427.5h1M580 431.5h1M580 436.5h1M580 441.5h1M580 445.5h1M580 450.5h1M580 455.5h1M580 459.5h1M580 464.5h1M580 468.5h1M580 473.5h1M580 478.5h1M580 482.5h1M580 487.5h1M580 492.5h1M580 496.5h1M580 501.5h1M580 506.5h1M580 510.5h1M580 515.5h1M580 520.5h1M580 524.5h1M580 526.5h1M580 530.5h1M580 535.5h1M580 540.5h1M580 544.5h1M580 549.5h1M580 554.5h1M580 558.5h1M580 563.5h1M580 568.5h1M580 572.5h1M580 577.5h1M580 582.5h1M580 586.5h1M580 591.5h1M580 595.5h1M580 600.5h1M580 605.5h1M580 609.5h1M580 614.5h1M580 619.5h1M580 623.5h1M580 628.5h1M580 633.5h1M580 637.5h1M580 642.5h1M580 647.5h1M580 651.5h1M580 656.5h1M580 661.5h1M580 665.5h1M580 670.5h1M580 674.5h1M580 679.5h1M580 684.5h1M580 688.5h1M580 693.5h1M580 698.5h1M580 702.5h1M580 707.5h1M580 712.5h1M580 716.5h1M580 721.5h1M580 726.5h1M580 730.5h1M580 735.5h1M580 740.5h1M580 744.5h1M580 749.5h1M580 753.5h1M580 760.5h1M580 765.5h1M580 769.5h1M580 774.5h1M580 779.5h1M580 783.5h1M580 788.5h1M580 793.5h1M580 797.5h1M580 802.5h1M580 806.5h1M580 811.5h1M580 816.5h1M580 820.5h1M580 825.5h1M580 830.5h1M580 834.5h1M580 839.5h1M580 844.5h1M580 848.5h1M580 853.5h1M580 858.5h1M580 862.5h1M580 867.5h1M580 872.5h1M580 876.5h1M580 881.5h1M580 886.5h1M580 890.5h1M580 895.5h1M580 899.5h1M580 904.5h1M580 909.5h1M580 913.5h1M580 918.5h1M580 923.5h1M580 927.5h1M580 932.5h1M580 937.5h1M580 941.5h1M580 946.5h1M580 951.5h1M580 955.5h1M580 960.5h1M580 965.5h1M580 969.5h1M580 974.5h1M580 978.5h1M580 983.5h1M580 988.5h1M755 58.5h1M755 62.5h1M755 67.5h1M755 72.5h1M755 76.5h1M755 81.5h1M755 86.5h1M755 90.5h1M755 95.5h1M755 100.5h1M755 104.5h1M755 109.5h1M755 114.5h1M755 118.5h1M755 123.5h1M755 128.5h1M755 132.5h1M755 137.5h1M755 141.5h1M755 146.5h1M755 151.5h1M755 155.5h1M755 160.5h1M755 165.5h1M755 169.5h1M755 174.5h1M755 179.5h1M755 183.5h1M755 188.5h1M755 193.5h1M755 197.5h1M755 202.5h1M755 207.5h1M755 211.5h1M755 216.5h1M755 220.5h1M755 225.5h1M755 230.5h1M755 234.5h1M755 239.5h1M755 244.5h1M755 248.5h1M755 253.5h1M755 258.5h1M755 262.5h1M755 267.5h1M755 272.5h1M755 276.5h1M755 281.5h1M755 286.5h1M755 290.5h1M755 292.5h1M755 297.5h1M755 301.5h1M755 306.5h1M755 311.5h1M755 315.5h1M755 320.5h1M755 324.5h1M755 329.5h1M755 334.5h1M755 338.5h1M755 343.5h1M755 348.5h1M755 352.5h1M755 357.5h1M755 362.5h1M755 366.5h1M755 371.5h1M755 376.5h1M755 380.5h1M755 385.5h1M755 390.5h1M755 394.5h1M755 399.5h1M755 403.5h1M755 408.5h1M755 413.5h1M755 417.5h1M755 422.5h1M755 427.5h1M755 431.5h1M755 436.5h1M755 441.5h1M755 445.5h1M755 450.5h1M755 455.5h1M755 459.5h1M755 464.5h1M755 468.5h1M755 473.5h1M755 478.5h1M755 482.5h1M755 487.5h1M755 492.5h1M755 496.5h1M755 501.5h1M755 506.5h1M755 510.5h1M755 515.5h1M755 520.5h1M755 524.5h1M755 526.5h1M755 530.5h1M755 535.5h1M755 540.5h1M755 544.5h1M755 549.5h1M755 554.5h1M755 558.5h1M755 563.5h1M755 568.5h1M755 572.5h1M755 577.5h1M755 582.5h1M755 586.5h1M755 591.5h1M755 595.5h1M755 600.5h1M755 605.5h1M755 609.5h1M755 614.5h1M755 619.5h1M755 623.5h1M755 628.5h1M755 633.5h1M755 637.5h1M755 642.5h1M755 647.5h1M755 651.5h1M755 656.5h1M755 661.5h1M755 665.5h1M755 670.5h1M755 674.5h1M755 679.5h1M755 684.5h1M755 688.5h1M755 693.5h1M755 698.5h1M755 702.5h1M755 707.5h1M755 712.5h1M755 716.5h1M755 721.5h1M755 726.5h1M755 730.5h1M755 735.5h1M755 740.5h1M755 744.5h1M755 749.5h1M755 753.5h1M755 760.5h1M755 765.5h1M755 769.5h1M755 774.5h1M755 779.5h1M755 783.5h1M755 788.5h1M755 793.5h1M755 797.5h1M755 802.5h1M755 806.5h1M755 811.5h1M755 816.5h1M755 820.5h1M755 825.5h1M755 830.5h1M755 834.5h1M755 839.5h1M755 844.5h1M755 848.5h1M755 853.5h1M755 858.5h1M755 862.5h1M755 867.5h1M755 872.5h1M755 876.5h1M755 881.5h1M755 886.5h1M755 890.5h1M755 895.5h1M755 899.5h1M755 904.5h1M755 909.5h1M755 913.5h1M755 918.5h1M755 923.5h1M755 927.5h1M755 932.5h1M755 937.5h1M755 941.5h1M755 946.5h1M755 951.5h1M755 955.5h1M755 960.5h1M755 965.5h1M755 969.5h1M755 974.5h1M755 978.5h1M755 983.5h1M755 988.5h1M929 58.5h1M929 62.5h1M929 67.5h1M929 72.5h1M929 76.5h1M929 81.5h1M929 86.5h1M929 90.5h1M929 95.5h1M929 100.5h1M929 104.5h1M929 109.5h1M929 114.5h1M929 118.5h1M929 123.5h1M929 128.5h1M929 132.5h1M929 137.5h1M929 141.5h1M929 146.5h1M929 151.5h1M929 155.5h1M929 160.5h1M929 165.5h1M929 169.5h1M929 174.5h1M929 179.5h1M929 183.5h1M929 188.5h1M929 193.5h1M929 197.5h1M929 202.5h1M929 207.5h1M929 211.5h1M929 216.5h1M929 220.5h1M929 225.5h1M929 230.5h1M929 234.5h1M929 239.5h1M929 244.5h1M929 248.5h1M929 253.5h1M929 258.5h1M929 262.5h1M929 267.5h1M929 272.5h1M929 276.5h1M929 281.5h1M929 286.5h1M929 290.5h1M929 292.5h1M929 297.5h1M929 301.5h1M929 306.5h1M929 311.5h1M929 315.5h1M929 320.5h1M929 324.5h1M929 329.5h1M929 334.5h1M929 338.5h1M929 343.5h1M929 348.5h1M929 352.5h1M929 357.5h1M929 362.5h1M929 366.5h1M929 371.5h1M929 376.5h1M929 380.5h1M929 385.5h1M929 390.5h1M929 394.5h1M929 399.5h1M929 403.5h1M929 408.5h1M929 413.5h1M929 417.5h1M929 422.5h1M929 427.5h1M929 431.5h1M929 436.5h1M929 441.5h1M929 445.5h1M929 450.5h1M929 455.5h1M929 459.5h1M929 464.5h1M929 468.5h1M929 473.5h1M929 478.5h1M929 482.5h1M929 487.5h1M929 492.5h1M929 496.5h1M929 501.5h1M929 506.5h1M929 510.5h1M929 515.5h1M929 520.5h1M929 524.5h1M929 526.5h1M929 530.5h1M929 535.5h1M929 540.5h1M929 544.5h1M929 549.5h1M929 554.5h1M929 558.5h1M929 563.5h1M929 568.5h1M929 572.5h1M929 577.5h1M929 582.5h1M929 586.5h1M929 591.5h1M929 595.5h1M929 600.5h1M929 605.5h1M929 609.5h1M929 614.5h1M929 619.5h1M929 623.5h1M929 628.5h1M929 633.5h1M929 637.5h1M929 642.5h1M929 647.5h1M929 651.5h1M929 656.5h1M929 661.5h1M929 665.5h1M929 670.5h1M929 674.5h1M929 679.5h1M929 684.5h1M929 688.5h1M929 693.5h1M929 698.5h1M929 702.5h1M929 707.5h1M929 712.5h1M929 716.5h1M929 721.5h1M929 726.5h1M929 730.5h1M929 735.5h1M929 740.5h1M929 744.5h1M929 749.5h1M929 753.5h1M929 760.5h1M929 765.5h1M929 769.5h1M929 774.5h1M929 779.5h1M929 783.5h1M929 788.5h1M929 793.5h1M929 797.5h1M929 802.5h1M929 806.5h1M929 811.5h1M929 816.5h1M929 820.5h1M929 825.5h1M929 830.5h1M929 834.5h1M929 839.5h1M929 844.5h1M929 848.5h1M929 853.5h1M929 858.5h1M929 862.5h1M929 867.5h1M929 872.5h1M929 876.5h1M929 881.5h1M929 886.5h1M929 890.5h1M929 895.5h1M929 899.5h1M929 904.5h1M929 909.5h1M929 913.5h1M929 918.5h1M929 923.5h1M929 927.5h1M929 932.5h1M929 937.5h1M929 941.5h1M929 946.5h1M929 951.5h1M929 955.5h1M929 960.5h1M929 965.5h1M929 969.5h1M929 974.5h1M929 978.5h1M929 983.5h1M929 988.5h1M1104 58.5h1M1104 62.5h1M1104 67.5h1M1104 72.5h1M1104 76.5h1M1104 81.5h1M1104 86.5h1M1104 90.5h1M1104 95.5h1M1104 100.5h1M1104 104.5h1M1104 109.5h1M1104 114.5h1M1104 118.5h1M1104 123.5h1M1104 128.5h1M1104 132.5h1M1104 137.5h1M1104 141.5h1M1104 146.5h1M1104 151.5h1M1104 155.5h1M1104 160.5h1M1104 165.5h1M1104 169.5h1M1104 174.5h1M1104 179.5h1M1104 183.5h1M1104 188.5h1M1104 193.5h1M1104 197.5h1M1104 202.5h1M1104 207.5h1M1104 211.5h1M1104 216.5h1M1104 220.5h1M1104 225.5h1M1104 230.5h1M1104 234.5h1M1104 239.5h1M1104 244.5h1M1104 248.5h1M1104 253.5h1M1104 258.5h1M1104 262.5h1M1104 267.5h1M1104 272.5h1M1104 276.5h1M1104 281.5h1M1104 286.5h1M1104 290.5h1M1104 292.5h1M1104 297.5h1M1104 301.5h1M1104 306.5h1M1104 311.5h1M1104 315.5h1M1104 320.5h1M1104 324.5h1M1104 329.5h1M1104 334.5h1M1104 338.5h1M1104 343.5h1M1104 348.5h1M1104 352.5h1M1104 357.5h1M1104 362.5h1M1104 366.5h1M1104 371.5h1M1104 376.5h1M1104 380.5h1M1104 385.5h1M1104 390.5h1M1104 394.5h1M1104 399.5h1M1104 403.5h1M1104 408.5h1M1104 413.5h1M1104 417.5h1M1104 422.5h1M1104 427.5h1M1104 431.5h1M1104 436.5h1M1104 441.5h1M1104 445.5h1M1104 450.5h1M1104 455.5h1M1104 459.5h1M1104 464.5h1M1104 468.5h1M1104 473.5h1M1104 478.5h1M1104 482.5h1M1104 487.5h1M1104 492.5h1M1104 496.5h1M1104 501.5h1M1104 506.5h1M1104 510.5h1M1104 515.5h1M1104 520.5h1M1104 524.5h1M1104 526.5h1M1104 530.5h1M1104 535.5h1M1104 540.5h1M1104 544.5h1M1104 549.5h1M1104 554.5h1M1104 558.5h1M1104 563.5h1M1104 568.5h1M1104 572.5h1M1104 577.5h1M1104 582.5h1M1104 586.5h1M1104 591.5h1M1104 595.5h1M1104 600.5h1M1104 605.5h1M1104 609.5h1M1104 614.5h1M1104 619.5h1M1104 623.5h1M1104 628.5h1M1104 633.5h1M1104 637.5h1M1104 642.5h1M1104 647.5h1M1104 651.5h1M1104 656.5h1M1104 661.5h1M1104 665.5h1M1104 670.5h1M1104 674.5h1M1104 679.5h1M1104 684.5h1M1104 688.5h1M1104 693.5h1M1104 698.5h1M1104 702.5h1M1104 707.5h1M1104 712.5h1M1104 716.5h1M1104 721.5h1M1104 726.5h1M1104 730.5h1M1104 735.5h1M1104 740.5h1M1104 744.5h1M1104 749.5h1M1104 753.5h1M1104 760.5h1M1104 765.5h1M1104 769.5h1M1104 774.5h1M1104 779.5h1M1104 783.5h1M1104 788.5h1M1104 793.5h1M1104 797.5h1M1104 802.5h1M1104 806.5h1M1104 811.5h1M1104 816.5h1M1104 820.5h1M1104 825.5h1M1104 830.5h1M1104 834.5h1M1104 839.5h1M1104 844.5h1M1104 848.5h1M1104 853.5h1M1104 858.5h1M1104 862.5h1M1104 867.5h1M1104 872.5h1M1104 876.5h1M1104 881.5h1M1104 886.5h1M1104 890.5h1M1104 895.5h1M1104 899.5h1M1104 904.5h1M1104 909.5h1M1104 913.5h1M1104 918.5h1M1104 923.5h1M1104 927.5h1M1104 932.5h1M1104 937.5h1M1104 941.5h1M1104 946.5h1M1104 951.5h1M1104 955.5h1M1104 960.5h1M1104 965.5h1M1104 969.5h1M1104 974.5h1M1104 978.5h1M1104 983.5h1M1104 988.5h1M1279 58.5h1M1279 62.5h1M1279 67.5h1M1279 72.5h1M1279 76.5h1M1279 81.5h1M1279 86.5h1M1279 90.5h1M1279 95.5h1M1279 100.5h1M1279 104.5h1M1279 109.5h1M1279 114.5h1M1279 118.5h1M1279 123.5h1M1279 128.5h1M1279 132.5h1M1279 137.5h1M1279 141.5h1M1279 146.5h1M1279 151.5h1M1279 155.5h1M1279 160.5h1M1279 165.5h1M1279 169.5h1M1279 174.5h1M1279 179.5h1M1279 183.5h1M1279 188.5h1M1279 193.5h1M1279 197.5h1M1279 202.5h1M1279 207.5h1M1279 211.5h1M1279 216.5h1M1279 220.5h1M1279 225.5h1M1279 230.5h1M1279 234.5h1M1279 239.5h1M1279 244.5h1M1279 248.5h1M1279 253.5h1M1279 258.5h1M1279 262.5h1M1279 267.5h1M1279 272.5h1M1279 276.5h1M1279 281.5h1M1279 286.5h1M1279 290.5h1M1279 292.5h1M1279 297.5h1M1279 301.5h1M1279 306.5h1M1279 311.5h1M1279 315.5h1M1279 320.5h1M1279 324.5h1M1279 329.5h1M1279 334.5h1M1279 338.5h1M1279 343.5h1M1279 348.5h1M1279 352.5h1M1279 357.5h1M1279 362.5h1M1279 366.5h1M1279 371.5h1M1279 376.5h1M1279 380.5h1M1279 385.5h1M1279 390.5h1M1279 394.5h1M1279 399.5h1M1279 403.5h1M1279 408.5h1M1279 413.5h1M1279 417.5h1M1279 422.5h1M1279 427.5h1M1279 431.5h1M1279 436.5h1M1279 441.5h1M1279 445.5h1M1279 450.5h1M1279 455.5h1M1279 459.5h1M1279 464.5h1M1279 468.5h1M1279 473.5h1M1279 478.5h1M1279 482.5h1M1279 487.5h1M1279 492.5h1M1279 496.5h1M1279 501.5h1M1279 506.5h1M1279 510.5h1M1279 515.5h1M1279 520.5h1M1279 524.5h1M1279 526.5h1M1279 530.5h1M1279 535.5h1M1279 540.5h1M1279 544.5h1M1279 549.5h1M1279 554.5h1M1279 558.5h1M1279 563.5h1M1279 568.5h1M1279 572.5h1M1279 577.5h1M1279 582.5h1M1279 586.5h1M1279 591.5h1M1279 595.5h1M1279 600.5h1M1279 605.5h1M1279 609.5h1M1279 614.5h1M1279 619.5h1M1279 623.5h1M1279 628.5h1M1279 633.5h1M1279 637.5h1M1279 642.5h1M1279 647.5h1M1279 651.5h1M1279 656.5h1M1279 661.5h1M1279 665.5h1M1279 670.5h1M1279 674.5h1M1279 679.5h1M1279 684.5h1M1279 688.5h1M1279 693.5h1M1279 698.5h1M1279 702.5h1M1279 707.5h1M1279 712.5h1M1279 716.5h1M1279 721.5h1M1279 726.5h1M1279 730.5h1M1279 735.5h1M1279 740.5h1M1279 744.5h1M1279 749.5h1M1279 753.5h1M1279 760.5h1M1279 765.5h1M1279 769.5h1M1279 774.5h1M1279 779.5h1M1279 783.5h1M1279 788.5h1M1279 793.5h1M1279 797.5h1M1279 802.5h1M1279 806.5h1M1279 811.5h1M1279 816.5h1M1279 820.5h1M1279 825.5h1M1279 830.5h1M1279 834.5h1M1279 839.5h1M1279 844.5h1M1279 848.5h1M1279 853.5h1M1279 858.5h1M1279 862.5h1M1279 867.5h1M1279 872.5h1M1279 876.5h1M1279 881.5h1M1279 886.5h1M1279 890.5h1M1279 895.5h1M1279 899.5h1M1279 904.5h1M1279 909.5h1M1279 913.5h1M1279 918.5h1M1279 923.5h1M1279 927.5h1M1279 932.5h1M1279 937.5h1M1279 941.5h1M1279 946.5h1M1279 951.5h1M1279 955.5h1M1279 960.5h1M1279 965.5h1M1279 969.5h1M1279 974.5h1M1279 978.5h1M1279 983.5h1M1279 988.5h1M1454 58.5h1M1454 62.5h1M1454 67.5h1M1454 72.5h1M1454 76.5h1M1454 81.5h1M1454 86.5h1M1454 90.5h1M1454 95.5h1M1454 100.5h1M1454 104.5h1M1454 109.5h1M1454 114.5h1M1454 118.5h1M1454 123.5h1M1454 128.5h1M1454 132.5h1M1454 137.5h1M1454 141.5h1M1454 146.5h1M1454 151.5h1M1454 155.5h1M1454 160.5h1M1454 165.5h1M1454 169.5h1M1454 174.5h1M1454 179.5h1M1454 183.5h1M1454 188.5h1M1454 193.5h1M1454 197.5h1M1454 202.5h1M1454 207.5h1M1454 211.5h1M1454 216.5h1M1454 220.5h1M1454 225.5h1M1454 230.5h1M1454 234.5h1M1454 239.5h1M1454 244.5h1M1454 248.5h1M1454 253.5h1M1454 258.5h1M1454 262.5h1M1454 267.5h1M1454 272.5h1M1454 276.5h1M1454 281.5h1M1454 286.5h1M1454 290.5h1M1454 292.5h1M1454 297.5h1M1454 301.5h1M1454 306.5h1M1454 311.5h1M1454 315.5h1M1454 320.5h1M1454 324.5h1M1454 329.5h1M1454 334.5h1M1454 338.5h1M1454 343.5h1M1454 348.5h1M1454 352.5h1M1454 357.5h1M1454 362.5h1M1454 366.5h1M1454 371.5h1M1454 376.5h1M1454 380.5h1M1454 385.5h1M1454 390.5h1M1454 394.5h1M1454 399.5h1M1454 403.5h1M1454 408.5h1M1454 413.5h1M1454 417.5h1M1454 422.5h1M1454 427.5h1M1454 431.5h1M1454 436.5h1M1454 441.5h1M1454 445.5h1M1454 450.5h1M1454 455.5h1M1454 459.5h1M1454 464.5h1M1454 468.5h1M1454 473.5h1M1454 478.5h1M1454 482.5h1M1454 487.5h1M1454 492.5h1M1454 496.5h1M1454 501.5h1M1454 506.5h1M1454 510.5h1M1454 515.5h1M1454 520.5h1M1454 524.5h1M1454 526.5h1M1454 530.5h1M1454 535.5h1M1454 540.5h1M1454 544.5h1M1454 549.5h1M1454 554.5h1M1454 558.5h1M1454 563.5h1M1454 568.5h1M1454 572.5h1M1454 577.5h1M1454 582.5h1M1454 586.5h1M1454 591.5h1M1454 595.5h1M1454 600.5h1M1454 605.5h1M1454 609.5h1M1454 614.5h1M1454 619.5h1M1454 623.5h1M1454 628.5h1M1454 633.5h1M1454 637.5h1M1454 642.5h1M1454 647.5h1M1454 651.5h1M1454 656.5h1M1454 661.5h1M1454 665.5h1M1454 670.5h1M1454 674.5h1M1454 679.5h1M1454 684.5h1M1454 688.5h1M1454 693.5h1M1454 698.5h1M1454 702.5h1M1454 707.5h1M1454 712.5h1M1454 716.5h1M1454 721.5h1M1454 726.5h1M1454 730.5h1M1454 735.5h1M1454 740.5h1M1454 744.5h1M1454 749.5h1M1454 753.5h1M1454 760.5h1M1454 765.5h1M1454 769.5h1M1454 774.5h1M1454 779.5h1M1454 783.5h1M1454 788.5h1M1454 793.5h1M1454 797.5h1M1454 802.5h1M1454 806.5h1M1454 811.5h1M1454 816.5h1M1454 820.5h1M1454 825.5h1M1454 830.5h1M1454 834.5h1M1454 839.5h1M1454 844.5h1M1454 848.5h1M1454 853.5h1M1454 858.5h1M1454 862.5h1M1454 867.5h1M1454 872.5h1M1454 876.5h1M1454 881.5h1M1454 886.5h1M1454 890.5h1M1454 895.5h1M1454 899.5h1M1454 904.5h1M1454 909.5h1M1454 913.5h1M1454 918.5h1M1454 923.5h1M1454 927.5h1M1454 932.5h1M1454 937.5h1M1454 941.5h1M1454 946.5h1M1454 951.5h1M1454 955.5h1M1454 960.5h1M1454 965.5h1M1454 969.5h1M1454 974.5h1M1454 978.5h1M1454 983.5h1M1454 988.5h1M1629 58.5h1M1629 62.5h1M1629 67.5h1M1629 72.5h1M1629 76.5h1M1629 81.5h1M1629 86.5h1M1629 90.5h1M1629 95.5h1M1629 100.5h1M1629 104.5h1M1629 109.5h1M1629 114.5h1M1629 118.5h1M1629 123.5h1M1629 128.5h1M1629 132.5h1M1629 137.5h1M1629 141.5h1M1629 146.5h1M1629 151.5h1M1629 155.5h1M1629 160.5h1M1629 165.5h1M1629 169.5h1M1629 174.5h1M1629 179.5h1M1629 183.5h1M1629 188.5h1M1629 193.5h1M1629 197.5h1M1629 202.5h1M1629 207.5h1M1629 211.5h1M1629 216.5h1M1629 220.5h1M1629 225.5h1M1629 230.5h1M1629 234.5h1M1629 239.5h1M1629 244.5h1M1629 248.5h1M1629 253.5h1M1629 258.5h1M1629 262.5h1M1629 267.5h1M1629 272.5h1M1629 276.5h1M1629 281.5h1M1629 286.5h1M1629 290.5h1M1629 292.5h1M1629 297.5h1M1629 301.5h1M1629 306.5h1M1629 311.5h1M1629 315.5h1M1629 320.5h1M1629 324.5h1M1629 329.5h1M1629 334.5h1M1629 338.5h1M1629 343.5h1M1629 348.5h1M1629 352.5h1M1629 357.5h1M1629 362.5h1M1629 366.5h1M1629 371.5h1M1629 376.5h1M1629 380.5h1M1629 385.5h1M1629 390.5h1M1629 394.5h1M1629 399.5h1M1629 403.5h1M1629 408.5h1M1629 413.5h1M1629 417.5h1M1629 422.5h1M1629 427.5h1M1629 431.5h1M1629 436.5h1M1629 441.5h1M1629 445.5h1M1629 450.5h1M1629 455.5h1M1629 459.5h1M1629 464.5h1M1629 468.5h1M1629 473.5h1M1629 478.5h1M1629 482.5h1M1629 487.5h1M1629 492.5h1M1629 496.5h1M1629 501.5h1M1629 506.5h1M1629 510.5h1M1629 515.5h1M1629 520.5h1M1629 524.5h1M1629 526.5h1M1629 530.5h1M1629 535.5h1M1629 540.5h1M1629 544.5h1M1629 549.5h1M1629 554.5h1M1629 558.5h1M1629 563.5h1M1629 568.5h1M1629 572.5h1M1629 577.5h1M1629 582.5h1M1629 586.5h1M1629 591.5h1M1629 595.5h1M1629 600.5h1M1629 605.5h1M1629 609.5h1M1629 614.5h1M1629 619.5h1M1629 623.5h1M1629 628.5h1M1629 633.5h1M1629 637.5h1M1629 642.5h1M1629 647.5h1M1629 651.5h1M1629 656.5h1M1629 661.5h1M1629 665.5h1M1629 670.5h1M1629 674.5h1M1629 679.5h1M1629 684.5h1M1629 688.5h1M1629 693.5h1M1629 698.5h1M1629 702.5h1M1629 707.5h1M1629 712.5h1M1629 716.5h1M1629 721.5h1M1629 726.5h1M1629 730.5h1M1629 735.5h1M1629 740.5h1M1629 744.5h1M1629 749.5h1M1629 753.5h1M1629 760.5h1M1629 765.5h1M1629 769.5h1M1629 774.5h1M1629 779.5h1M1629 783.5h1M1629 788.5h1M1629 793.5h1M1629 797.5h1M1629 802.5h1M1629 806.5h1M1629 811.5h1M1629 816.5h1M1629 820.5h1M1629 825.5h1M1629 830.5h1M1629 834.5h1M1629 839.5h1M1629 844.5h1M1629 848.5h1M1629 853.5h1M1629 858.5h1M1629 862.5h1M1629 867.5h1M1629 872.5h1M1629 876.5h1M1629 881.5h1M1629 886.5h1M1629 890.5h1M1629 895.5h1M1629 899.5h1M1629 904.5h1M1629 909.5h1M1629 913.5h1M1629 918.5h1M1629 923.5h1M1629 927.5h1M1629 932.5h1M1629 937.5h1M1629 941.5h1M1629 946.5h1M1629 951.5h1M1629 955.5h1M1629 960.5h1M1629 965.5h1M1629 969.5h1M1629 974.5h1M1629 978.5h1M1629 983.5h1M1629 988.5h1" stroke="#c0c0c0" stroke-width="1" shape-rendering="crispEdges" fill="none"/>
<rect x="3" y="290" width="1748" height="2" fill="#7a7a7a"/>
<rect x="3" y="524" width="1748" height="2" fill="#7a7a7a"/>
<rect x="3" y="758" width="1748" height="2" fill="#7a7a7a"/>
<path d="M55.5 93.9V993" stroke="#d0d0d0" stroke-width="1" stroke-dasharray="6 4.58" shape-rendering="crispEdges"/>
<path d="M3 267.5H1719" stroke="#d0d0d0" stroke-width="1" stroke-dasharray="5 5" shape-rendering="crispEdges"/>
<path d="M3 431.5H1719" stroke="#d0d0d0" stroke-width="1" stroke-dasharray="5 5" shape-rendering="crispEdges"/>
<path d="M3 735.5H1719" stroke="#d0d0d0" stroke-width="1" stroke-dasharray="5 5" shape-rendering="crispEdges"/>
<path d="M3 965.5H1719" stroke="#d0d0d0" stroke-width="1" stroke-dasharray="5 5" shape-rendering="crispEdges"/>
<rect x="1716.6" y="75.0" width="34.0" height="13" fill="#000"/>
<rect x="1716.6" y="98.0" width="34.0" height="13" fill="#000"/>
<rect x="1716.6" y="122.0" width="34.0" height="13" fill="#000"/>
<rect x="1716.6" y="145.0" width="34.0" height="13" fill="#000"/>
<rect x="1716.6" y="168.0" width="34.0" height="13" fill="#000"/>
<rect x="1716.6" y="191.0" width="34.0" height="13" fill="#000"/>
<rect x="1716.6" y="214.0" width="34.0" height="13" fill="#000"/>
<rect x="1724.2" y="238.0" width="26.4" height="13" fill="#000"/>
<rect x="1724.2" y="261.0" width="26.4" height="13" fill="#000"/>
<rect x="1724.2" y="309.0" width="26.4" height="13" fill="#000"/>
<rect x="1698.0" y="332.0" width="52.6" height="13" fill="#000"/>
<rect x="1698.0" y="356.0" width="52.6" height="13" fill="#000"/>
<rect x="1698.0" y="379.0" width="52.6" height="13" fill="#000"/>
<rect x="1698.0" y="402.0" width="52.6" height="13" fill="#000"/>
<rect x="1724.2" y="425.0" width="26.4" height="13" fill="#000"/>
<rect x="1693.4" y="449.0" width="57.2" height="13" fill="#000"/>
<rect x="1693.4" y="472.0" width="57.2" height="13" fill="#000"/>
<rect x="1693.4" y="495.0" width="57.2" height="13" fill="#000"/>
<rect x="1672.2" y="543.0" width="78.4" height="13" fill="#000"/>
<rect x="1672.2" y="566.0" width="78.4" height="13" fill="#000"/>
<rect x="1672.2" y="590.0" width="78.4" height="13" fill="#000"/>
<rect x="1672.2" y="613.0" width="78.4" height="13" fill="#000"/>
<rect x="1672.2" y="636.0" width="78.4" height="13" fill="#000"/>
<rect x="1672.2" y="659.0" width="78.4" height="13" fill="#000"/>
<rect x="1672.2" y="682.0" width="78.4" height="13" fill="#000"/>
<rect x="1679.7" y="706.0" width="70.9" height="13" fill="#000"/>
<rect x="1725.2" y="729.0" width="25.4" height="13" fill="#000"/>
<rect x="1690.9" y="773.0" width="59.7" height="13" fill="#000"/>
<rect x="1690.9" y="796.0" width="59.7" height="13" fill="#000"/>
<rect x="1690.9" y="819.0" width="59.7" height="13" fill="#000"/>
<rect x="1690.9" y="842.0" width="59.7" height="13" fill="#000"/>
<rect x="1690.9" y="866.0" width="59.7" height="13" fill="#000"/>
<rect x="1690.9" y="889.0" width="59.7" height="13" fill="#000"/>
<rect x="1690.9" y="912.0" width="59.7" height="13" fill="#000"/>
<rect x="1690.9" y="935.0" width="59.7" height="13" fill="#000"/>
<rect x="1724.9" y="959.0" width="25.7" height="13" fill="#000"/>
<path d="M3.0 966.4L43.5 966.4L45.5 966.4L47.5 966.4L49.5 966.4L51.5 966.4L53.5 966.4L55.5 966.4L57.5 966.4L59.5 966.4L61.5 966.4L63.5 966.4L65.5 966.4L67.5 966.4L69.5 966.4L71.5 966.4L73.5 966.4L75.5 966.4L77.5 966.4L79.5 966.4L81.5 966.4L83.5 966.4L85.5 966.4L87.5 966.4L89.5 966.4L91.5 966.4L93.5 966.4L95.5 966.4L97.5 966.4L99.5 966.4L101.5 966.4L103.5 966.4L105.5 966.4L107.5 966.4L109.5 966.4L111.5 966.4L113.5 966.4L115.5 966.4L117.5 966.4L119.5 966.4L121.5 966.4L123.5 966.4L125.5 966.4L127.5 966.4L129.5 966.4L131.5 966.4L133.5 966.4L135.5 966.4L137.5 966.4L139.5 966.4L141.5 966.4L143.5 966.4L145.5 966.4L147.5 966.4L149.5 966.4L151.5 966.4L153.5 966.4L155.5 966.4L157.5 966.4L159.5 966.4L161.5 966.4L163.5 965.4L165.5 965.1L167.5 962.3L169.5 961.5L171.5 959.4L173.5 959.6L175.5 958.4L177.5 958.1L179.5 956.5L181.5 956.2L183.5 955.4L185.5 955.4L187.5 954.3L189.5 953.1L191.5 953.1L193.5 952.0L195.5 950.1L197.5 950.7L199.5 949.2L201.5 947.7L203.5 947.6L205.5 946.8L207.5 946.0L209.5 944.5L211.5 944.9L213.5 944.1L215.5 943.6L217.5 942.1L219.5 942.0L221.5 940.5L223.5 939.7L225.5 938.9L227.5 937.7L229.5 937.7L231.5 936.6L233.5 936.0L235.5 934.9L237.5 935.4L239.5 934.1L241.5 934.2L243.5 932.2L245.5 932.9L247.5 931.6L249.5 930.3L251.5 931.1L253.5 929.1L255.5 929.5L257.5 928.5L259.5 927.5L261.5 926.6L263.5 926.7L265.5 926.7L267.5 925.4L269.5 924.1L271.5 923.8L273.5 922.9L275.5 923.0L277.5 923.2L279.5 922.0L281.5 922.0L283.5 920.7L285.5 920.6L287.5 920.1L289.5 919.3L291.5 918.8L293.5 919.4L295.5 918.2L297.5 917.4L299.5 916.9L301.5 916.8L303.5 915.6L305.5 915.5L307.5 915.4L309.5 914.5L311.5 914.4L313.5 914.7L315.5 914.2L317.5 912.3L319.5 912.6L321.5 912.1L323.5 912.9L325.5 914.1L327.5 910.5L329.5 908.6L331.5 906.3L333.5 905.5L335.5 906.1L337.5 904.8L339.5 905.1L341.5 903.8L343.5 903.3L345.5 902.5L347.5 902.7L349.5 902.2L351.5 901.0L353.5 901.6L355.5 900.0L357.5 899.5L359.5 899.7L361.5 899.2L363.5 899.4L365.5 898.2L367.5 897.0L369.5 896.5L371.5 897.1L373.5 896.2L375.5 896.4L377.5 894.8L379.5 894.3L381.5 894.3L383.5 893.8L385.5 893.4L387.5 892.2L389.5 892.1L391.5 891.3L393.5 891.5L395.5 891.5L397.5 890.6L399.5 889.5L401.5 890.1L403.5 889.6L405.5 888.4L407.5 889.1L409.5 888.7L411.5 887.7L413.5 887.7L415.5 886.6L417.5 887.0L419.5 885.8L421.5 886.3L423.5 886.2L425.5 885.2L427.5 885.2L429.5 884.8L431.5 884.3L433.5 882.8L435.5 882.0L437.5 882.1L439.5 881.6L441.5 880.6L443.5 880.1L445.5 879.1L447.5 877.9L449.5 876.5L451.5 876.0L453.5 876.1L455.5 876.1L457.5 875.4L459.5 875.4L461.5 874.0L463.5 874.7L465.5 874.0L467.5 874.4L469.5 872.6L471.5 873.0L473.5 872.6L475.5 871.9L477.5 871.2L479.5 872.3L481.5 870.8L483.5 871.5L485.5 871.0L487.5 869.9L489.5 869.0L491.5 869.4L493.5 868.5L495.5 868.1L497.5 867.6L499.5 867.2L501.5 866.3L503.5 867.0L505.5 865.1L507.5 865.4L509.5 865.6L511.5 865.2L513.5 864.7L515.5 863.2L517.5 863.8L519.5 862.7L521.5 861.5L523.5 861.1L525.5 860.6L527.5 860.1L529.5 861.1L531.5 859.2L533.5 859.6L535.5 859.2L537.5 858.8L539.5 857.7L541.5 857.4L543.5 857.3L545.5 856.6L547.5 856.9L549.5 856.6L551.5 855.5L553.5 855.8L555.5 855.4L557.5 854.7L559.5 854.7L561.5 853.6L563.5 853.9L565.5 854.0L567.5 853.2L569.5 853.2L571.5 853.1L573.5 851.4L575.5 852.1L577.5 851.7L579.5 850.9L581.5 850.1L583.5 850.0L585.5 849.9L587.5 849.1L589.5 848.2L591.5 848.8L593.5 846.9L595.5 847.8L597.5 846.7L599.5 845.8L601.5 846.4L603.5 845.9L605.5 844.7L607.5 844.2L609.5 843.4L611.5 844.0L613.5 842.1L615.5 841.9L617.5 841.4L619.5 841.3L621.5 840.9L623.5 839.7L625.5 839.5L627.5 840.1L629.5 839.6L631.5 837.8L633.5 838.0L635.5 837.1L637.5 836.6L639.5 837.2L641.5 836.0L643.5 835.8L645.5 834.8L647.5 834.9L649.5 835.0L651.5 834.8L653.5 833.8L655.5 834.3L657.5 833.7L659.5 833.8L661.5 833.6L663.5 832.6L665.5 832.4L667.5 832.8L669.5 832.6L671.5 832.3L673.5 832.1L675.5 831.8L677.5 831.2L679.5 831.2L681.5 831.2L683.5 829.6L685.5 830.5L687.5 829.4L689.5 828.5L691.5 827.8L693.5 827.3L695.5 827.5L697.5 827.1L699.5 827.0L701.5 825.4L703.5 825.0L705.5 824.5L707.5 824.8L709.5 823.6L711.5 823.8L713.5 823.8L715.5 822.2L717.5 823.1L719.5 821.3L721.5 821.1L723.5 820.7L725.5 820.1L727.5 821.1L729.5 820.5L731.5 819.7L733.5 820.2L735.5 820.1L737.5 819.9L739.5 819.8L741.5 819.0L743.5 818.8L745.5 820.1L747.5 819.2L749.5 818.7L751.5 819.3L753.5 819.2L755.5 818.0L757.5 819.1L759.5 818.2L761.5 817.5L763.5 818.3L765.5 817.3L767.5 817.4L769.5 817.2L771.5 817.2L773.5 815.5L775.5 815.5L777.5 815.2L779.5 814.7L781.5 815.1L783.5 814.8L785.5 814.5L787.5 814.6L789.5 813.3L791.5 813.7L793.5 812.7L795.5 812.7L797.5 812.4L799.5 812.2L801.5 811.9L803.5 812.4L805.5 812.5L807.5 811.9L809.5 811.6L811.5 811.4L813.5 810.7L815.5 811.2L817.5 809.5L819.5 809.2L821.5 810.4L823.5 809.8L825.5 809.9L827.5 808.2L829.5 808.6L831.5 808.4L833.5 808.8L835.5 808.3L837.5 808.3L839.5 806.9L841.5 807.1L843.5 806.4L845.5 806.2L847.5 805.6L849.5 805.8L851.5 806.8L853.5 806.1L855.5 805.6L857.5 806.4L859.5 805.2L861.5 805.8L863.5 806.2L865.5 806.1L867.5 806.1L869.5 805.2L871.5 805.6L873.5 806.2L875.5 805.4L877.5 805.8L879.5 805.3L881.5 805.8L883.5 804.8L885.5 804.9L887.5 805.0L889.5 803.3L891.5 803.3L893.5 803.8L895.5 803.9L897.5 802.9L899.5 803.3L901.5 803.0L903.5 801.7L905.5 801.4L907.5 801.5L909.5 800.5L911.5 801.0L913.5 801.1L915.5 801.1L917.5 800.1L919.5 799.2L921.5 799.2L923.5 798.9L925.5 798.3L927.5 798.8L929.5 798.9L931.5 799.0L933.5 798.1L935.5 797.4L937.5 797.2L939.5 798.1L941.5 797.2L943.5 797.6L945.5 797.1L947.5 796.5L949.5 796.3L951.5 795.6L953.5 796.5L955.5 796.3L957.5 795.8L959.5 795.8L961.5 795.3L963.5 794.4L965.5 795.4L967.5 795.3L969.5 794.5L971.5 794.4L973.5 794.3L975.5 794.3L977.5 794.2L979.5 794.1L981.5 793.3L983.5 794.3L985.5 794.2L987.5 794.5L989.5 794.4L991.5 794.0L993.5 793.1L995.5 794.1L997.5 793.3L999.5 793.3L1001.5 793.2L1003.5 792.7L1005.5 793.4L1007.5 792.9L1009.5 793.2L1011.5 792.1L1013.5 792.3L1015.5 792.6L1017.5 792.5L1019.5 792.8L1021.5 793.0L1023.5 792.2L1025.5 792.5L1027.5 792.4L1029.5 792.6L1031.5 792.5L1033.5 791.7L1035.5 791.6L1037.5 791.5L1039.5 791.4L1041.5 792.0L1043.5 790.8L1045.5 791.8L1047.5 791.8L1049.5 791.1L1051.5 791.5L1053.5 791.5L1055.5 790.7L1057.5 791.1L1059.5 790.7L1061.5 791.8L1063.5 791.8L1065.5 791.1L1067.5 791.5L1069.5 791.1L1071.5 791.5L1073.5 791.1L1075.5 791.1L1077.5 790.7L1079.5 791.1L1081.5 791.1L1083.5 790.9L1085.5 790.7L1087.5 791.2L1089.5 790.6L1091.5 789.3L1093.5 789.4L1095.5 789.2L1097.5 789.3L1099.5 789.8L1101.5 788.2L1103.5 788.3L1105.5 788.4L1107.5 787.5L1109.5 788.0L1111.5 788.2L1113.5 787.9L1115.5 788.0L1117.5 787.1L1119.5 786.2L1121.5 786.7L1123.5 785.8L1125.5 787.1L1127.5 785.8L1129.5 786.0L1131.5 785.4L1133.5 785.7L1135.5 785.9L1137.5 785.3L1139.5 784.5L1141.5 785.0L1143.5 784.8L1145.5 784.6L1147.5 784.9L1149.5 784.7L1151.5 784.1L1153.5 784.6L1155.5 783.8L1157.5 784.0L1159.5 784.5L1161.5 784.9L1163.5 783.6L1165.5 783.8L1167.5 783.9L1169.5 784.3L1171.5 784.8L1173.5 785.0L1175.5 785.1L1177.5 785.6L1179.5 785.3L1181.5 785.5L1183.5 784.9L1185.5 785.0L1187.5 786.2L1189.5 786.7L1191.5 786.8L1193.5 785.6L1195.5 785.3L1197.5 785.9L1199.5 785.4L1201.5 786.1L1203.5 786.0L1205.5 786.0L1207.5 785.1L1209.5 785.4L1211.5 785.7L1213.5 784.9L1215.5 784.8L1217.5 785.1L1219.5 784.6L1221.5 785.0L1223.5 784.9L1225.5 784.1L1227.5 784.7L1229.5 784.4L1231.5 784.3L1233.5 785.1L1235.5 785.3L1237.5 785.5L1239.5 785.6L1241.5 785.8L1243.5 786.7L1245.5 786.5L1247.5 785.6L1249.5 786.5L1251.5 786.2L1253.5 786.8L1255.5 786.6L1257.5 787.0L1259.5 786.3L1261.5 787.0L1263.5 786.6L1265.5 787.4L1267.5 787.4L1269.5 787.0L1271.5 786.6L1273.5 787.0L1275.5 786.3L1277.5 787.4L1279.5 787.0L1281.5 787.4L1283.5 787.0L1285.5 786.3L1287.5 787.0L1289.5 787.0L1291.5 786.3L1293.5 786.6L1295.5 787.6L1297.5 786.8L1299.5 786.3L1301.5 786.6L1303.5 787.0L1305.5 786.1L1307.5 786.0L1309.5 786.3L1311.5 786.3L1313.5 786.2L1315.5 786.5L1317.5 786.7L1319.5 786.3L1321.5 786.3L1323.5 785.8L1325.5 786.1L1327.5 785.2L1329.5 785.5L1331.5 785.9L1333.5 785.0L1335.5 784.9L1337.5 785.2L1339.5 785.3L1341.5 786.2L1343.5 785.7L1345.5 785.2L1347.5 785.4L1349.5 786.3L1351.5 787.2L1353.5 786.3L1355.5 787.3L1357.5 787.2L1359.5 788.2L1361.5 788.4L1363.5 789.4L1365.5 789.1L1367.5 790.5L1369.5 790.7L1371.5 791.3L1372.2 791.5L1372.9 791.7L1373.6 792.2L1374.3 792.7L1375.0 793.2L1375.7 793.7L1376.4 794.2L1377.1 794.7L1377.8 796.6L1378.5 799.1L1379.2 801.6L1379.9 804.1L1380.6 809.2L1381.3 829.8L1382.0 850.9L1382.7 874.6L1383.4 894.4L1384.1 899.3L1384.8 904.2L1385.5 909.2L1386.2 914.1L1386.9 917.9L1387.6 920.7L1388.3 923.6L1389.0 926.4L1389.7 929.3L1390.4 932.2L1391.1 934.8L1391.8 935.9L1392.5 937.1L1393.2 938.2L1393.9 939.4L1394.6 940.5L1395.3 941.7L1396.0 942.9L1396.7 944.0L1397.4 945.2L1398.1 946.1L1398.8 946.6L1399.5 947.0L1400.2 947.5L1400.9 948.0L1401.6 948.4L1402.3 948.9L1403.0 949.3L1403.7 949.8L1404.4 950.2L1405.1 950.7L1405.8 951.2L1406.5 951.6L1407.2 952.0L1407.9 952.2L1408.6 952.4L1409.3 952.6L1410.0 952.8L1410.7 952.9L1411.4 953.1L1412.1 953.3L1412.8 953.5L1413.5 953.7L1414.2 953.8L1414.9 953.8L1415.6 953.8L1416.3 953.8L1417.0 953.8L1417.7 953.8L1418.4 953.8L1419.1 953.8L1419.8 953.8L1420.5 953.8L1421.2 953.8L1421.9 953.8L1422.6 953.8L1423.3 953.7L1424.0 953.6L1424.7 953.4L1425.4 953.2L1426.1 953.0L1426.8 952.8L1427.5 952.7L1428.2 952.5L1428.9 952.3L1429.6 952.1L1430.3 952.0L1431.0 952.2L1431.7 952.3L1432.4 952.4L1433.1 952.5L1433.8 952.6L1434.5 952.7L1435.2 952.8L1435.9 952.9L1436.6 953.0L1437.3 953.1L1438.0 953.2L1438.7 953.3L1439.4 953.4L1440.1 953.4L1442.1 953.4L1444.1 953.5L1446.1 953.5L1448.1 953.5L1450.1 953.5L1452.1 953.5L1454.1 953.6L1456.1 953.6L1458.1 953.6L1460.1 953.6L1462.1 953.7L1464.1 953.7L1466.1 953.7L1468.1 953.7L1470.1 953.7L1472.1 953.8L1474.1 953.8L1476.1 953.8L1478.1 953.8L1480.1 953.8L1482.1 953.8L1484.1 953.8L1486.1 953.8L1488.1 953.8L1490.1 953.8L1492.1 953.7L1494.1 953.7L1496.1 953.7L1498.1 953.7L1500.1 953.7L1502.1 953.7L1504.1 953.7L1506.1 953.7L1508.1 953.7L1510.1 953.7L1512.1 953.7L1514.1 953.7L1516.1 953.7L1518.1 953.7L1520.1 953.7L1522.1 953.6L1524.1 953.6L1526.1 953.6L1528.1 953.6L1530.1 953.6L1532.1 953.6L1534.1 953.6L1536.1 953.6L1538.1 953.6L1540.1 953.6L1542.1 953.6L1544.1 953.6L1546.1 953.6L1548.1 953.6L1550.1 953.6L1552.1 953.6L1554.1 953.5L1556.1 953.5L1558.1 953.5L1560.1 953.5L1562.1 953.5L1564.1 953.5L1566.1 953.5L1568.1 953.5L1570.1 953.5L1572.1 953.5L1574.1 953.5L1576.1 953.5L1578.1 953.5L1580.1 953.5L1582.1 953.5L1584.1 953.4L1586.1 953.4L1588.1 953.4L1590.1 953.4L1592.1 953.4L1594.1 953.4L1596.1 953.4L1598.1 953.4L1600.1 953.4L1602.1 953.4L1604.1 953.4L1606.1 953.4L1608.1 953.4L1610.1 953.4L1612.1 953.4L1614.1 953.3L1616.1 953.3L1618.1 953.3L1620.1 953.3L1622.1 953.3L1624.1 953.3L1626.1 953.3L1628.1 953.3L1630.1 953.3L1632.1 953.3L1634.1 953.3L1636.1 953.3L1638.1 953.3L1640.1 953.3L1642.1 953.3L1644.1 953.2L1646.1 953.2L1648.1 953.2L1650.1 953.2L1652.1 953.2L1654.1 953.2L1656.1 953.2L1658.1 953.2L1660.1 953.2L1662.1 953.2L1664.1 953.2L1666.1 953.2L1668.1 953.2L1670.1 953.2L1672.1 953.2L1674.1 953.2L1676.1 953.1L1678.1 953.1L1680.1 953.1L1682.1 953.1L1684.1 953.1L1686.1 953.1L1688.1 953.1L1690.1 953.1L1692.1 953.1L1694.1 953.1L1696.1 953.1L1698.1 953.1L1700.1 953.1L1702.1 953.1L1704.1 953.1L1706.1 953.0L1708.1 953.0L1710.1 953.0L1712.1 953.0L1714.1 953.0L1716.1 953.0L1718.1 953.0L1720.1 953.0L1722.1 953.0L1724.1 953.0L1726.1 953.0L1728.1 953.0L1730.1 953.0L1732.1 953.0L1734.1 953.0L1736.1 952.9L1738.1 952.9L1740.1 952.9L1742.1 952.9L1744.1 952.9L1746.1 952.9L1748.1 952.9L1750.1 952.9L1751.0 952.9" stroke="#782f96" stroke-width="1.2" fill="none" stroke-linejoin="round" shape-rendering="crispEdges"/>
<path d="M3.0 734.7L55.0 734.7L55.0 734.7L59.6 733.4L64.9 731.8L70.9 730.1L77.5 728.2L84.7 726.1L92.4 723.8L100.5 721.4L109.1 718.9L118.0 716.3L127.1 713.7L136.5 710.9L146.1 708.2L155.8 705.4L165.5 702.6L175.3 699.8L185.0 697.0L194.5 694.4L203.9 691.7L213.1 689.2L222.0 686.8L230.5 684.5L238.8 682.3L247.2 680.1L255.5 677.9L263.9 675.7L272.2 673.6L280.6 671.5L288.9 669.3L297.2 667.2L305.6 665.1L313.9 663.1L322.2 661.0L330.6 659.0L338.9 657.0L347.2 655.0L355.6 653.0L363.9 651.0L372.3 649.0L380.6 647.1L388.9 645.2L397.3 643.3L405.6 641.4L413.9 639.5L422.3 637.7L430.6 635.8L438.9 634.0L447.3 632.2L455.6 630.4L463.9 628.6L472.3 626.8L480.6 625.0L489.0 623.3L497.3 621.6L505.6 619.9L514.0 618.2L522.3 616.5L530.6 614.9L539.0 613.3L547.3 611.7L555.7 610.1L564.0 608.6L572.4 607.1L580.7 605.6L589.1 604.1L597.6 602.7L606.2 601.3L614.9 599.8L623.6 598.5L632.3 597.1L641.1 595.7L649.9 594.4L658.6 593.1L667.4 591.8L676.0 590.6L684.6 589.3L693.2 588.1L701.6 587.0L709.9 585.8L718.1 584.7L726.1 583.6L733.9 582.5L741.6 581.5L749.1 580.5L756.3 579.5L766.2 578.2L776.0 576.9L785.5 575.7L794.9 574.6L804.1 573.5L813.1 572.5L821.8 571.5L830.2 570.6L838.4 569.7L846.2 568.9L853.7 568.1L860.8 567.3L867.6 566.6L874.0 565.9L880.0 565.3L892.4 564.0L901.4 563.1L908.4 562.4L914.6 561.9L921.2 561.4L929.5 560.7L936.6 560.1L943.6 559.6L950.8 559.0L958.3 558.4L966.2 557.9L974.8 557.3L984.2 556.7L994.6 556.1L1001.7 555.7L1009.4 555.3L1017.7 554.9L1026.3 554.5L1035.3 554.1L1044.5 553.6L1053.7 553.2L1062.9 552.8L1072.0 552.4L1080.8 552.0L1089.2 551.7L1097.2 551.4L1104.6 551.1L1114.2 550.7L1122.8 550.4L1130.7 550.2L1138.2 550.0L1145.4 549.8L1152.8 549.6L1160.5 549.5L1168.7 549.4L1177.9 549.2L1185.5 549.2L1193.6 549.1L1202.1 549.1L1211.0 549.1L1220.1 549.1L1229.2 549.1L1238.3 549.1L1247.2 549.1L1255.8 549.1L1264.0 549.2L1271.7 549.2L1278.8 549.2L1289.5 549.4L1299.2 549.6L1307.9 549.8L1315.9 550.0L1323.5 550.2L1330.9 550.4L1338.3 550.6L1348.0 550.8L1356.4 550.9L1364.7 551.1L1373.6 551.2L1384.2 551.5L1391.9 551.7L1400.3 551.9L1409.2 552.2L1418.4 552.4L1427.8 552.7L1437.2 553.0L1446.4 553.4L1455.2 553.8L1463.4 554.2L1471.2 554.7L1478.7 555.2L1486.2 555.7L1493.9 556.2L1502.3 556.9L1511.4 557.6L1521.7 558.4L1528.8 559.0L1536.6 559.6L1544.9 560.3L1553.6 561.0L1562.6 561.8L1571.8 562.5L1581.0 563.3L1590.1 564.1L1599.0 564.9L1607.5 565.6L1615.4 566.3L1622.8 567.0L1629.4 567.6L1641.2 568.8L1650.4 569.9L1658.2 570.9L1665.4 571.8L1673.0 572.7L1682.1 573.5L1690.4 574.1L1699.8 574.7L1709.8 575.2L1719.8 575.7L1729.5 576.2L1738.2 576.6L1745.6 576.9L1751.0 577.2" stroke="#f7931e" stroke-width="1.2" fill="none" stroke-linejoin="round" shape-rendering="crispEdges"/>
<path d="M3.0 430.5L165.0 430.2L175.0 423.8L190.0 415.0L205.0 408.0L215.0 405.5L225.0 404.5L237.5 405.8L262.5 408.2L300.0 412.5L337.5 415.2L400.0 415.8L480.0 415.8L600.0 414.6L650.0 413.6L900.0 413.4L1100.0 412.5L1200.0 413.3L1252.5 413.6L1278.8 416.2L1316.7 416.5L1372.0 417.0L1378.5 414.2L1381.4 411.2L1382.3 395.8L1386.7 399.6L1392.5 405.4L1401.2 412.7L1410.0 418.0L1421.7 422.0L1439.2 425.8L1456.7 428.2L1480.0 429.6L1515.0 430.5L1751.0 430.8" stroke="#8cc63f" stroke-width="1.2" fill="none" stroke-linejoin="round" shape-rendering="crispEdges"/>
<path d="M3.0 265.5L5.0 265.5L7.0 266.0L9.0 265.2L11.0 265.5L13.0 265.5L15.0 266.5L17.0 265.5L19.0 265.5L21.0 266.5L23.0 265.5L25.0 266.5L27.0 265.5L29.0 265.5L31.0 265.5L33.0 266.0L35.0 266.0L37.0 265.5L39.0 265.5L41.0 265.5L43.0 266.5L45.0 266.0L47.0 265.5L49.0 266.5L51.0 265.5L53.0 265.5L55.0 265.5L55.6 259.0L56.2 270.5L57.0 264.0L58.0 267.0L59.5 265.0L61.0 267.0L63.0 265.5L64.8 266.5L65.2 257.5L66.0 269.0L66.6 257.0L67.5 256.0L68.5 257.5L69.5 256.1L71.0 254.5L72.5 253.5L74.0 252.1L75.5 250.8L77.0 249.5L78.5 248.5L80.0 246.8L81.5 246.1L83.0 245.1L84.5 244.3L86.0 243.0L87.5 242.1L89.0 241.3L90.5 240.9L92.0 239.8L93.5 239.1L95.0 238.3L96.5 237.6L98.0 236.7L99.5 236.0L101.0 236.0L102.5 234.7L104.0 234.2L105.5 234.2L107.0 233.7L108.5 232.9L110.0 232.3L111.5 231.8L113.0 231.3L114.5 231.1L116.0 229.9L117.5 230.1L119.0 229.1L120.5 229.4L122.0 228.7L123.5 228.3L125.0 227.6L126.5 227.6L128.0 227.5L129.5 226.8L131.0 226.2L132.5 225.9L134.0 225.8L135.5 225.5L137.0 225.5L138.5 225.2L140.0 224.9L141.5 223.9L143.0 223.7L144.5 223.7L146.0 223.5L147.5 223.5L149.0 222.6L150.5 222.7L152.0 222.4L153.5 222.5L155.0 221.9L156.5 222.5L158.0 221.9L159.5 222.5L161.0 222.2L162.5 221.9L164.0 222.5L165.5 224.3L167.0 226.6L168.5 227.9L170.0 229.7L171.5 230.3L173.0 231.2L174.5 231.5L176.0 231.9L177.5 231.8L179.0 232.0L180.5 232.3L182.0 232.8L183.5 233.0L185.0 233.0L186.5 233.2L188.0 234.1L189.5 234.1L191.0 234.2L192.5 235.1L194.0 234.9L195.5 235.9L197.0 235.7L198.5 236.3L200.0 236.7L201.5 237.1L203.0 237.5L204.5 237.9L206.0 238.4L207.5 238.8L209.0 239.2L210.5 239.3L212.0 240.0L213.5 240.7L215.0 241.1L216.5 241.2L218.0 241.6L219.5 241.7L221.0 242.6L222.5 243.0L224.0 243.1L225.5 243.3L227.0 243.1L228.5 243.2L230.0 243.2L231.5 243.3L234.0 243.3L235.6 243.6L237.2 242.4L238.8 244.4L240.4 242.7L242.0 242.7L243.6 242.3L245.2 243.0L246.8 241.4L248.4 242.6L250.0 241.7L251.6 243.7L253.2 244.4L254.8 241.2L256.4 242.4L258.0 241.1L259.6 241.5L261.2 242.3L262.8 240.6L264.4 241.4L266.0 241.8L267.6 241.3L269.2 241.7L270.8 241.3L272.4 241.2L274.0 242.0L275.6 241.1L277.2 241.1L278.8 240.7L280.4 241.0L282.0 243.8L283.6 243.4L285.2 242.9L286.8 242.5L288.4 243.7L290.0 242.4L291.6 243.6L293.2 241.2L294.8 241.5L296.4 244.3L298.0 243.0L299.6 243.8L301.2 243.4L302.8 243.4L304.4 242.6L306.0 243.0L307.6 243.0L309.2 243.8L310.8 242.2L312.4 242.6L314.0 242.6L315.6 242.6L317.2 242.2L318.8 243.0L320.4 243.8L322.0 243.0L323.6 240.6L324.6 233.4L325.4 236.0L325.2 235.7L326.8 242.2L328.4 243.8L330.0 241.8L331.6 242.2L333.2 242.2L334.8 241.5L336.4 241.9L338.0 243.1L339.6 243.1L341.2 242.3L342.8 241.1L344.4 242.3L346.0 241.5L347.6 242.7L349.2 241.1L350.8 241.5L352.4 240.7L354.0 240.7L355.6 241.1L357.2 241.9L358.8 241.1L360.4 241.1L362.0 241.9L363.6 241.9L365.2 240.3L366.8 241.9L368.4 240.7L370.0 241.1L371.6 242.1L373.2 243.3L374.8 244.9L376.4 243.3L378.0 242.1L379.6 240.7L381.2 244.3L382.8 243.9L384.4 243.1L386.0 243.9L387.6 243.9L389.2 243.9L390.8 243.9L392.4 243.5L394.0 243.9L395.6 243.5L397.2 242.3L398.8 242.3L400.4 242.4L402.0 242.0L403.6 242.4L405.2 243.9L406.8 244.9L408.4 244.6L410.0 243.6L411.6 242.6L413.2 242.0L414.8 242.0L416.4 242.0L418.0 241.2L419.6 242.4L421.2 242.8L422.8 242.8L424.4 242.4L426.0 240.0L427.6 241.6L429.2 239.0L430.8 238.8L432.4 237.9L434.0 238.6L435.6 242.4L437.2 243.6L438.8 243.2L440.4 243.2L442.0 243.2L443.6 243.2L445.2 241.2L446.8 242.0L448.4 243.2L450.0 244.4L451.6 245.6L453.2 244.8L454.8 245.2L456.4 243.7L458.0 241.3L459.6 240.9L461.2 242.7L462.8 242.7L464.4 244.4L466.0 244.0L467.6 243.3L469.2 244.1L470.8 244.5L472.4 244.1L474.0 243.3L475.6 243.7L477.2 240.5L478.8 242.1L480.4 241.7L482.0 240.5L483.6 240.9L485.2 241.7L486.8 242.9L488.4 243.3L490.0 242.5L491.6 242.9L493.2 241.7L494.8 241.7L496.4 242.5L498.0 241.7L499.6 241.7L501.2 241.3L502.8 241.3L504.4 241.7L506.0 241.3L507.6 243.3L509.2 242.5L510.8 244.1L512.4 243.7L514.0 242.9L515.6 242.9L517.2 242.5L518.8 242.5L520.4 243.3L522.0 244.1L523.6 244.3L525.2 246.1L526.8 244.5L528.4 243.5L530.0 243.3L531.6 240.9L533.2 241.7L534.8 241.4L536.4 241.0L538.0 242.6L539.6 243.8L541.2 240.6L542.8 242.2L544.4 242.3L546.0 240.7L547.6 240.8L549.2 242.0L550.8 243.2L552.4 242.6L554.0 243.0L555.6 243.4L557.2 242.6L558.8 243.4L560.4 242.6L562.0 243.8L563.6 243.0L565.2 244.2L566.8 243.8L568.4 240.6L570.0 240.2L571.6 241.0L573.2 240.9L574.8 240.1L576.4 239.3L578.0 240.4L579.6 240.0L581.2 243.4L582.8 243.0L584.4 242.0L586.0 239.6L587.6 239.3L589.2 240.9L590.8 241.7L592.4 241.0L594.0 241.8L595.6 241.8L597.2 241.4L598.8 241.8L600.4 242.7L602.0 243.9L603.6 243.1L605.2 243.9L606.8 242.7L608.4 243.1L610.0 242.7L611.6 242.7L613.2 241.9L614.8 243.1L616.4 243.9L618.0 243.5L619.6 243.5L621.2 244.7L622.8 244.3L624.4 244.7L626.0 244.7L627.6 242.3L629.2 241.9L630.8 243.5L632.4 241.9L634.0 242.7L635.6 243.1L637.2 243.5L638.8 243.9L640.4 243.1L642.0 245.0L643.6 245.6L645.2 248.2L646.8 246.0L648.4 245.0L650.0 243.5L651.6 241.9L653.2 244.3L654.8 243.9L656.4 243.1L658.0 244.3L659.6 241.5L661.2 241.5L662.8 241.9L664.4 242.3L666.0 240.3L667.6 240.8L669.2 242.0L670.8 242.8L672.4 242.0L674.0 242.8L675.6 244.4L677.2 243.6L678.8 241.6L680.4 241.6L682.0 242.4L683.6 242.0L685.2 242.4L686.8 242.8L688.4 242.8L690.0 244.0L691.6 242.8L693.2 243.2L694.8 243.2L696.4 242.4L698.0 244.0L699.6 241.2L701.2 241.2L702.8 241.2L704.4 241.7L706.0 240.5L707.6 240.5L709.2 241.3L710.8 243.4L712.4 242.6L714.0 242.6L715.6 242.6L717.2 243.1L718.8 245.2L720.4 245.4L722.0 244.2L723.6 243.0L725.2 242.0L726.8 242.8L728.4 243.2L730.0 244.0L731.6 243.2L733.2 244.5L734.8 244.1L736.4 243.3L738.0 243.3L739.6 244.2L741.2 243.4L742.8 244.2L744.4 243.0L746.0 242.6L747.6 242.7L749.2 243.1L750.8 244.3L752.4 244.7L754.0 244.0L755.6 244.8L757.2 244.2L758.8 243.4L760.4 242.2L762.0 242.7L763.6 244.3L765.2 244.1L766.8 244.5L768.4 246.2L770.0 245.4L771.6 244.6L773.2 245.8L774.8 245.0L776.4 242.3L778.0 242.7L779.6 242.3L781.2 242.3L782.8 242.8L784.4 242.0L786.0 244.8L787.6 244.4L789.2 243.2L790.8 244.1L792.4 242.9L794.0 241.1L795.6 239.2L797.2 241.4L798.8 243.6L800.4 244.5L802.0 246.1L803.6 247.2L805.2 244.8L806.8 243.6L808.4 244.3L810.0 243.5L811.6 243.2L813.2 243.2L814.8 242.5L816.4 241.5L818.0 240.2L819.6 241.2L821.2 244.2L822.8 244.5L824.4 244.9L826.0 243.4L827.6 243.8L829.2 243.0L830.8 246.2L832.4 245.1L834.0 245.5L835.6 245.5L837.2 244.7L838.8 244.7L840.4 243.6L842.0 243.2L843.6 244.8L845.2 243.2L846.8 244.5L848.4 244.9L850.0 244.5L851.6 244.1L853.2 244.1L854.8 244.2L856.4 245.0L858.0 243.4L859.6 243.8L861.2 243.9L862.8 243.9L864.4 243.9L866.0 245.9L867.6 246.3L869.2 244.8L870.8 245.2L872.4 245.2L874.0 244.4L875.6 244.1L877.2 244.5L878.8 243.3L880.4 244.1L882.0 243.3L883.6 244.2L885.2 245.4L886.8 245.0L888.4 244.2L890.0 245.1L891.6 244.7L893.2 245.1L894.8 245.1L896.4 247.1L898.0 246.0L899.6 245.2L901.2 245.2L902.8 245.2L904.4 244.9L906.0 244.5L907.6 245.3L909.2 245.1L910.8 242.5L912.4 242.6L914.0 243.3L915.6 245.1L917.2 245.7L918.8 246.5L920.4 246.1L922.0 246.2L923.6 245.0L925.2 245.2L926.8 246.4L928.4 246.9L930.0 246.5L931.6 245.7L933.2 245.7L934.8 247.0L936.4 247.0L938.0 246.6L939.6 247.8L941.2 246.7L942.8 246.7L944.4 247.5L946.0 247.5L947.6 248.4L949.2 247.2L950.8 245.6L952.4 246.4L954.0 246.5L955.6 245.7L957.2 244.9L958.8 246.5L960.4 246.2L962.0 245.8L963.6 245.8L965.2 247.4L966.8 246.3L968.4 246.3L970.0 246.7L971.6 247.5L973.2 247.6L974.8 247.6L976.4 247.6L978.0 248.0L979.6 247.7L981.2 248.5L982.8 247.7L984.4 246.2L986.0 246.6L987.6 247.0L989.2 247.4L990.8 247.9L992.4 246.7L994.0 245.9L995.6 249.7L997.2 250.8L998.8 250.0L1000.4 249.2L1002.0 248.4L1003.6 247.9L1005.2 248.5L1006.8 247.6L1008.4 247.7L1010.0 247.7L1011.6 247.4L1013.2 247.1L1014.8 246.3L1016.4 246.3L1018.0 246.6L1019.6 247.3L1021.2 247.3L1022.8 247.6L1024.4 247.0L1026.0 248.0L1027.6 247.4L1029.2 248.0L1030.8 247.2L1032.4 247.8L1034.0 247.8L1035.6 247.8L1037.2 247.6L1038.8 247.6L1040.4 247.6L1042.0 248.3L1043.6 247.1L1045.2 248.3L1046.8 248.0L1048.4 247.2L1050.0 247.8L1051.6 247.2L1053.2 247.9L1054.8 247.6L1056.4 248.2L1058.0 247.6L1059.6 249.5L1061.2 249.8L1062.8 249.2L1064.4 249.6L1066.0 249.3L1067.6 249.0L1069.2 247.2L1070.8 247.0L1072.4 249.7L1074.0 250.0L1075.6 250.1L1077.2 249.8L1078.8 250.4L1080.4 250.4L1082.0 249.6L1083.6 250.5L1085.2 249.9L1086.8 247.6L1088.4 247.3L1090.0 248.2L1091.6 248.2L1093.2 248.9L1094.8 249.5L1096.4 250.1L1098.0 250.2L1099.6 249.3L1101.2 249.4L1102.8 249.5L1104.4 249.5L1106.0 249.1L1107.6 249.1L1109.2 249.3L1110.8 249.1L1112.4 249.6L1114.0 249.4L1115.6 248.8L1117.2 248.6L1118.8 248.6L1120.4 250.5L1122.0 249.7L1123.6 250.5L1125.2 250.3L1126.8 250.1L1128.4 249.7L1130.0 248.5L1131.6 248.5L1133.2 249.0L1134.8 249.2L1136.4 248.8L1138.0 248.6L1139.6 248.6L1141.2 249.5L1142.8 249.5L1144.4 249.1L1146.0 248.7L1147.6 249.3L1149.2 248.9L1150.8 249.2L1152.4 249.2L1154.0 248.8L1155.6 249.4L1157.2 248.8L1158.8 248.8L1160.4 248.4L1162.0 248.7L1163.6 250.6L1165.2 249.7L1166.8 250.0L1168.4 250.0L1170.0 248.5L1171.6 250.2L1173.2 250.7L1174.8 250.7L1176.4 250.9L1178.0 250.7L1179.6 251.0L1181.2 250.1L1182.8 250.4L1184.4 250.2L1186.0 250.0L1187.6 250.0L1189.2 250.0L1190.8 249.6L1192.4 250.7L1194.0 250.7L1195.6 250.9L1197.2 249.7L1198.8 249.3L1200.4 249.3L1202.0 249.3L1203.6 249.8L1205.2 249.8L1206.8 249.4L1208.4 249.4L1210.0 249.4L1211.6 249.4L1213.2 249.5L1214.8 249.1L1216.4 249.5L1218.0 249.7L1219.6 250.2L1221.2 251.2L1222.8 251.5L1224.4 251.7L1226.0 251.1L1227.6 250.4L1229.2 249.2L1230.8 247.4L1232.4 248.5L1234.0 250.5L1235.6 251.0L1237.2 250.8L1238.8 251.0L1240.4 251.5L1242.0 251.3L1243.6 250.9L1245.2 251.3L1246.8 251.6L1248.4 251.0L1250.0 251.8L1251.6 250.4L1253.2 250.8L1254.8 250.4L1256.4 250.5L1258.0 250.1L1259.6 250.5L1261.2 250.5L1262.8 250.6L1264.4 250.2L1266.0 250.8L1267.6 251.9L1269.2 251.7L1270.8 251.9L1272.4 251.8L1274.0 252.4L1275.6 252.2L1277.2 252.0L1278.8 251.6L1280.4 251.7L1282.0 251.9L1283.6 252.6L1285.2 251.9L1286.8 251.3L1288.4 250.3L1290.0 249.7L1291.6 250.3L1293.2 251.4L1294.8 251.3L1296.4 251.7L1298.0 250.6L1299.6 249.8L1301.2 248.7L1302.8 250.1L1304.4 251.2L1306.0 251.4L1307.6 251.9L1309.2 252.1L1310.8 251.7L1312.4 251.9L1314.0 252.2L1315.6 251.8L1317.2 251.8L1318.8 251.4L1320.4 251.9L1322.0 252.3L1323.6 251.5L1325.2 251.9L1326.8 251.9L1328.4 252.0L1330.0 252.4L1331.6 252.0L1333.2 251.8L1334.8 252.1L1336.4 251.9L1338.0 252.5L1339.6 252.4L1341.2 252.0L1342.8 252.8L1344.4 252.2L1346.0 252.4L1347.6 251.2L1349.2 253.5L1350.8 253.1L1352.4 252.8L1354.0 253.0L1355.6 253.4L1357.2 252.8L1358.8 253.1L1360.4 252.9L1362.0 252.7L1363.6 252.7L1365.2 252.7L1366.8 252.6L1368.4 252.6L1370.0 252.2L1371.0 252.5L1374.4 251.5L1376.0 239.3L1378.5 238.2L1379.6 231.0L1380.3 247.4L1381.0 229.0L1381.6 138.4L1382.6 137.4L1383.0 78.3L1383.6 73.2L1384.6 80.4L1385.6 74.3L1386.7 86.5L1388.7 93.6L1390.0 98.7L1391.8 115.0L1393.4 131.3L1394.8 147.6L1396.4 163.9L1398.3 182.2L1400.3 198.5L1402.6 210.7L1405.0 220.9L1408.0 230.1L1411.1 236.2L1415.2 242.3L1420.3 248.4L1423.3 251.1L1427.4 256.0L1429.9 258.0L1432.5 258.0L1434.5 256.6L1439.6 257.6L1453.9 259.0L1468.2 260.2L1498.4 260.6L1506.5 263.3L1522.6 263.3L1537.2 261.6L1614.7 261.3L1622.7 264.5L1632.4 264.9L1650.2 262.8L1663.1 260.3L1687.3 260.3L1690.6 261.6L1708.3 262.1L1751.0 262.4" stroke="#fff200" stroke-width="1.3" fill="none" stroke-linejoin="round" shape-rendering="crispEdges"/>
<text x="1746.6" y="86.1" text-anchor="end" font-size="13" letter-spacing=".3" fill="#fff200" stroke="#000" stroke-width="2" stroke-linejoin="round" paint-order="stroke">40 V</text>
<text x="1746.6" y="109.1" text-anchor="end" font-size="13" letter-spacing=".3" fill="#fff200" stroke="#000" stroke-width="2" stroke-linejoin="round" paint-order="stroke">35 V</text>
<text x="1746.6" y="133.1" text-anchor="end" font-size="13" letter-spacing=".3" fill="#fff200" stroke="#000" stroke-width="2" stroke-linejoin="round" paint-order="stroke">30 V</text>
<text x="1746.6" y="156.1" text-anchor="end" font-size="13" letter-spacing=".3" fill="#fff200" stroke="#000" stroke-width="2" stroke-linejoin="round" paint-order="stroke">25 V</text>
<text x="1746.6" y="179.1" text-anchor="end" font-size="13" letter-spacing=".3" fill="#fff200" stroke="#000" stroke-width="2" stroke-linejoin="round" paint-order="stroke">20 V</text>
<text x="1746.6" y="202.1" text-anchor="end" font-size="13" letter-spacing=".3" fill="#fff200" stroke="#000" stroke-width="2" stroke-linejoin="round" paint-order="stroke">15 V</text>
<text x="1746.6" y="225.1" text-anchor="end" font-size="13" letter-spacing=".3" fill="#fff200" stroke="#000" stroke-width="2" stroke-linejoin="round" paint-order="stroke">10 V</text>
<text x="1746.6" y="249.1" text-anchor="end" font-size="13" letter-spacing=".3" fill="#fff200" stroke="#000" stroke-width="2" stroke-linejoin="round" paint-order="stroke">5 V</text>
<text x="1746.6" y="272.1" text-anchor="end" font-size="13" letter-spacing=".3" fill="#fff200" stroke="#000" stroke-width="2" stroke-linejoin="round" paint-order="stroke">0 V</text>
<text x="1746.6" y="320.1" text-anchor="end" font-size="13" letter-spacing=".3" fill="#8cc63f" stroke="#000" stroke-width="2" stroke-linejoin="round" paint-order="stroke">1 V</text>
<text x="1746.6" y="343.1" text-anchor="end" font-size="13" letter-spacing=".3" fill="#8cc63f" stroke="#000" stroke-width="2" stroke-linejoin="round" paint-order="stroke">800 mV</text>
<text x="1746.6" y="367.1" text-anchor="end" font-size="13" letter-spacing=".3" fill="#8cc63f" stroke="#000" stroke-width="2" stroke-linejoin="round" paint-order="stroke">600 mV</text>
<text x="1746.6" y="390.1" text-anchor="end" font-size="13" letter-spacing=".3" fill="#8cc63f" stroke="#000" stroke-width="2" stroke-linejoin="round" paint-order="stroke">400 mV</text>
<text x="1746.6" y="413.1" text-anchor="end" font-size="13" letter-spacing=".3" fill="#8cc63f" stroke="#000" stroke-width="2" stroke-linejoin="round" paint-order="stroke">200 mV</text>
<text x="1746.6" y="436.1" text-anchor="end" font-size="13" letter-spacing=".3" fill="#8cc63f" stroke="#000" stroke-width="2" stroke-linejoin="round" paint-order="stroke">0 V</text>
<text x="1746.6" y="460.1" text-anchor="end" font-size="13" letter-spacing=".3" fill="#8cc63f" stroke="#000" stroke-width="2" stroke-linejoin="round" paint-order="stroke">-200 mV</text>
<text x="1746.6" y="483.1" text-anchor="end" font-size="13" letter-spacing=".3" fill="#8cc63f" stroke="#000" stroke-width="2" stroke-linejoin="round" paint-order="stroke">-400 mV</text>
<text x="1746.6" y="506.1" text-anchor="end" font-size="13" letter-spacing=".3" fill="#8cc63f" stroke="#000" stroke-width="2" stroke-linejoin="round" paint-order="stroke">-600 mV</text>
<text x="1746.6" y="554.1" text-anchor="end" font-size="13" letter-spacing=".3" fill="#f7931e" stroke="#000" stroke-width="2" stroke-linejoin="round" paint-order="stroke">579.734 mT</text>
<text x="1746.6" y="577.1" text-anchor="end" font-size="13" letter-spacing=".3" fill="#f7931e" stroke="#000" stroke-width="2" stroke-linejoin="round" paint-order="stroke">507.267 mT</text>
<text x="1746.6" y="601.1" text-anchor="end" font-size="13" letter-spacing=".3" fill="#f7931e" stroke="#000" stroke-width="2" stroke-linejoin="round" paint-order="stroke">434.801 mT</text>
<text x="1746.6" y="624.1" text-anchor="end" font-size="13" letter-spacing=".3" fill="#f7931e" stroke="#000" stroke-width="2" stroke-linejoin="round" paint-order="stroke">362.334 mT</text>
<text x="1746.6" y="647.1" text-anchor="end" font-size="13" letter-spacing=".3" fill="#f7931e" stroke="#000" stroke-width="2" stroke-linejoin="round" paint-order="stroke">289.867 mT</text>
<text x="1746.6" y="670.1" text-anchor="end" font-size="13" letter-spacing=".3" fill="#f7931e" stroke="#000" stroke-width="2" stroke-linejoin="round" paint-order="stroke">217.400 mT</text>
<text x="1746.6" y="693.1" text-anchor="end" font-size="13" letter-spacing=".3" fill="#f7931e" stroke="#000" stroke-width="2" stroke-linejoin="round" paint-order="stroke">144.934 mT</text>
<text x="1746.6" y="717.1" text-anchor="end" font-size="13" letter-spacing=".3" fill="#f7931e" stroke="#000" stroke-width="2" stroke-linejoin="round" paint-order="stroke">72.467 mT</text>
<text x="1746.6" y="740.1" text-anchor="end" font-size="13" letter-spacing=".3" fill="#f7931e" stroke="#000" stroke-width="2" stroke-linejoin="round" paint-order="stroke">0 T</text>
<text x="1746.6" y="784.1" text-anchor="end" font-size="13" letter-spacing=".3" fill="#782f96" stroke="#000" stroke-width="2" stroke-linejoin="round" paint-order="stroke">8.143 kA</text>
<text x="1746.6" y="807.1" text-anchor="end" font-size="13" letter-spacing=".3" fill="#782f96" stroke="#000" stroke-width="2" stroke-linejoin="round" paint-order="stroke">7.125 kA</text>
<text x="1746.6" y="830.1" text-anchor="end" font-size="13" letter-spacing=".3" fill="#782f96" stroke="#000" stroke-width="2" stroke-linejoin="round" paint-order="stroke">6.108 kA</text>
<text x="1746.6" y="853.1" text-anchor="end" font-size="13" letter-spacing=".3" fill="#782f96" stroke="#000" stroke-width="2" stroke-linejoin="round" paint-order="stroke">5.090 kA</text>
<text x="1746.6" y="877.1" text-anchor="end" font-size="13" letter-spacing=".3" fill="#782f96" stroke="#000" stroke-width="2" stroke-linejoin="round" paint-order="stroke">4.072 kA</text>
<text x="1746.6" y="900.1" text-anchor="end" font-size="13" letter-spacing=".3" fill="#782f96" stroke="#000" stroke-width="2" stroke-linejoin="round" paint-order="stroke">3.054 kA</text>
<text x="1746.6" y="923.1" text-anchor="end" font-size="13" letter-spacing=".3" fill="#782f96" stroke="#000" stroke-width="2" stroke-linejoin="round" paint-order="stroke">2.036 kA</text>
<text x="1746.6" y="946.1" text-anchor="end" font-size="13" letter-spacing=".3" fill="#782f96" stroke="#000" stroke-width="2" stroke-linejoin="round" paint-order="stroke">1.018 kA</text>
<text x="1746.6" y="970.1" text-anchor="end" font-size="13" letter-spacing=".3" fill="#782f96" stroke="#000" stroke-width="2" stroke-linejoin="round" paint-order="stroke">0 A</text>
<text x="55" y="987.2" text-anchor="middle" font-size="13" fill="#bcbcbc" stroke="#000" stroke-width="3" paint-order="stroke">0 s</text>
<rect x="209.5" y="976" width="42.0" height="12" fill="#000"/>
<text x="230.5" y="987.2" text-anchor="middle" font-size="13" fill="#bcbcbc" stroke="#000" stroke-width="3" paint-order="stroke">4.5 ms</text>
<rect x="389.9" y="976" width="31.2" height="12" fill="#000"/>
<text x="405.5" y="987.2" text-anchor="middle" font-size="13" fill="#bcbcbc" stroke="#000" stroke-width="3" paint-order="stroke">9 ms</text>
<rect x="555.9" y="976" width="49.2" height="12" fill="#000"/>
<text x="580.5" y="987.2" text-anchor="middle" font-size="13" fill="#bcbcbc" stroke="#000" stroke-width="3" paint-order="stroke">13.5 ms</text>
<rect x="736.3" y="976" width="38.4" height="12" fill="#000"/>
<text x="755.5" y="987.2" text-anchor="middle" font-size="13" fill="#bcbcbc" stroke="#000" stroke-width="3" paint-order="stroke">18 ms</text>
<rect x="904.9" y="976" width="49.2" height="12" fill="#000"/>
<text x="929.5" y="987.2" text-anchor="middle" font-size="13" fill="#bcbcbc" stroke="#000" stroke-width="3" paint-order="stroke">22.5 ms</text>
<rect x="1085.3" y="976" width="38.4" height="12" fill="#000"/>
<text x="1104.5" y="987.2" text-anchor="middle" font-size="13" fill="#bcbcbc" stroke="#000" stroke-width="3" paint-order="stroke">27 ms</text>
<rect x="1254.9" y="976" width="49.2" height="12" fill="#000"/>
<text x="1279.5" y="987.2" text-anchor="middle" font-size="13" fill="#bcbcbc" stroke="#000" stroke-width="3" paint-order="stroke">31.5 ms</text>
<rect x="1435.3" y="976" width="38.4" height="12" fill="#000"/>
<text x="1454.5" y="987.2" text-anchor="middle" font-size="13" fill="#bcbcbc" stroke="#000" stroke-width="3" paint-order="stroke">36 ms</text>
<rect x="1604.9" y="976" width="49.2" height="12" fill="#000"/>
<text x="1629.5" y="987.2" text-anchor="middle" font-size="13" fill="#bcbcbc" stroke="#000" stroke-width="3" paint-order="stroke">40.5 ms</text>
<path d="M9 161.5H78.3L84 174.5L78.3 187.5H9Q6.7 187.5 6.7 185.2V163.8Q6.7 161.5 9 161.5Z" fill="#1f1d08" stroke="#fff200" stroke-width="2" stroke-linejoin="round"/>
<path d="M32.7 161.5V187.5" stroke="#fff200" stroke-width="2"/>
<text x="19.5" y="178.6" text-anchor="middle" font-size="12.5" fill="#fff200">C 1</text>
<text x="57.6" y="178.6" text-anchor="middle" font-size="12.5" fill="#fff200">20 V</text>
<path d="M9 395.4H78.3L84 408.4L78.3 421.4H9Q6.7 421.4 6.7 419.09999999999997V397.7Q6.7 395.4 9 395.4Z" fill="#141c08" stroke="#8cc63f" stroke-width="2" stroke-linejoin="round"/>
<path d="M32.7 395.4V421.4" stroke="#8cc63f" stroke-width="2"/>
<text x="19.5" y="412.5" text-anchor="middle" font-size="12.5" fill="#8cc63f">C 4</text>
<text x="57.6" y="412.5" text-anchor="middle" font-size="11.8" fill="#8cc63f">200 mV</text>
<text x="101.5" y="178.7" font-size="18" letter-spacing=".75" fill="#fff200">U_loop,coil</text>
<text x="101.5" y="413" font-size="18" letter-spacing=".85" fill="#8cc63f">U_Photod</text>
<path d="M9 722.3H29L41.6 735L29 747.7H9Q6.6 747.7 6.6 745.3000000000001V724.6999999999999Q6.6 722.3 9 722.3Z" fill="#1a1007" stroke="#f7931e" stroke-width="1.3" stroke-linejoin="round"/>
<text x="23" y="739.4" text-anchor="middle" font-size="12.5" fill="#f7931e">M 1</text>
<path d="M9 952.5H29L41.6 965.2L29 977.9000000000001H9Q6.6 977.9000000000001 6.6 975.5000000000001V954.9Q6.6 952.5 9 952.5Z" fill="#702c8c" stroke="#702c8c" stroke-width="1.3" stroke-linejoin="round"/>
<text x="23" y="969.6" text-anchor="middle" font-size="12.5" fill="#fff">M 2</text>
<text x="53.3" y="739.8" font-size="18" letter-spacing=".4" fill="#f7931e">B_t</text>
<text x="53.6" y="969.8" font-size="18" letter-spacing=".3" fill="#782f96">I_p</text>
<path d="M44.8 58H65.2L55.3 67.6Z" fill="#f7931e"/>
<path d="M46 69H64V87.8H58.6L55.3 94.6L52 87.8H46Z" fill="#000" stroke="#f7931e" stroke-width="2.3"/>
<path d="M50.4 74H59.8" stroke="#f7931e" stroke-width="2" fill="none"/><path d="M55.1 74V84" stroke="#f7931e" stroke-width="2.8" fill="none"/>
<path d="M1710 65H1741Q1744 65 1744 68V98.5Z" fill="#4e4e4e"/>
<circle cx="1737.4" cy="71.6" r="3.7" fill="#5a5a5a" stroke="#a4a4a4" stroke-width="1.4"/>
<path d="M1734.4 74.6L1728.2 80.4" stroke="#a8a8a8" stroke-width="2.7" stroke-linecap="round"/>
</g>
<path d="M593 36.5H586.5V52.5H593M1161 36.5H1167.5V52.5H1161" stroke="#f0f0f0" stroke-width="1" fill="none" shape-rendering="crispEdges"/>
<path d="M587 45H1167" stroke="#b8b8b8" stroke-width="1.6"/>
<path d="M596 33H611L603.5 37.8Z" fill="#f7931e"/>
<path d="M597.3 40.8H609.2V51.6H605.8L603.3 56.5L600.8 51.6H597.3Z" fill="#000" stroke="#f7931e" stroke-width="1.6"/>
<path d="M600.1 43.6H606.5M603.3 43.6V49.6" stroke="#f7931e" stroke-width="1.7" fill="none"/>
<circle cx="1761.9" cy="503.5" r="2.1" fill="#c6c6c6"/>
<circle cx="1761.9" cy="512.3" r="2.1" fill="#c6c6c6"/>
<circle cx="1761.9" cy="520.9" r="2.1" fill="#c6c6c6"/>
</svg>
<div class="abs" style="left:1769px;top:30px;width:151px;text-align:center;font-size:14.5px;line-height:18px;font-weight:bold;letter-spacing:1.25px;color:#ececec">Add New...</div>
<div class="abs btn rb" style="left:1778px;top:54px;letter-spacing:-.3px">Cursors</div>
<div class="abs btn rb" style="left:1850px;top:54px;letter-spacing:.5px">Callout</div>
<div class="abs btn rb" style="left:1778px;top:100px;letter-spacing:.3px">Measure</div>
<div class="abs btn rb" style="left:1850px;top:100px">Search</div>
<div class="abs btn rb" style="left:1778px;top:146px;line-height:16px;padding-top:0;letter-spacing:-.15px">Results<br>Table</div>
<div class="abs btn rb" style="left:1850px;top:146px;letter-spacing:1px">Plot</div>
<div class="abs sep" style="left:1773px;top:189px;width:144px"></div>
<div class="abs btn rb" style="left:1778px;top:196px"></div>
<svg class="abs" style="left:1795px;top:200px" width="32" height="30" viewBox="0 0 32 30">
<rect x="3" y="3" width="21.5" height="19" fill="none" stroke="#cfcfcf" stroke-width="1.8" stroke-dasharray="3.6 2.4"/>
<circle cx="16" cy="10.6" r="4.6" fill="none" stroke="#bdbdbd" stroke-width="1.7"/>
<path d="M12.8 14.2L7.6 18.6" stroke="#bdbdbd" stroke-width="2.6" stroke-linecap="round"/>
<path d="M21 17.6L28.6 21.4L25.6 22.6L27.6 26.4L26 27.2L24 23.4L21.8 25.6Z" fill="#c4c4c4"/>
</svg>
<div class="abs btn rb" style="left:1850px;top:196px;letter-spacing:.9px">More...</div>
<div class="abs sep" style="left:1773px;top:241px;width:144px"></div>

<!-- bottom bar -->
<div class="abs badge" style="left:3px"><div class="hd" style="background:#4b4720;color:#fff200">Ch 1</div><div class="r r1">5 V/div</div><div class="r r2">1 M&#937;</div><div class="r r3">200 kHz</div><div class="bw">B<span>w</span></div></div>
<div class="abs badge off" style="left:98px"><div class="hd" style="background:#27828a;color:#15282a">Ch 2</div><div class="r r1">250 mV/div</div><div class="r r2">1 M&#937;</div><div class="r r3">200 kHz</div><div class="bw">B<span>w</span></div></div>
<div class="abs badge off" style="left:193px"><div class="hd" style="background:#8d3b4a;color:#b9a3a7">Ch 3</div><div class="r r1">450 mV/div</div><div class="r r2">1 M&#937;</div><div class="r r3">200 kHz</div><div class="bw">B<span>w</span></div></div>
<div class="abs badge" style="left:288px"><div class="hd" style="background:#38441f;color:#9ad430">Ch 4</div><div class="r r1">200 mV/div</div><div class="r r2">1 M&#937;</div><div class="r r3">200 kHz</div><div class="bw">B<span>w</span></div></div>
<div class="abs badge" style="left:383px"><div class="hd" style="background:#4e3521;color:#f7931e;letter-spacing:.75px">Math 1</div><div class="r r1">72.4 mT/div</div><div class="r r2">Intg(Ch2)&#8230;</div></div>
<div class="abs badge" style="left:478px"><div class="hd" style="background:#6a2c8e;color:#fff;letter-spacing:.75px">Math 2</div><div class="r r1">1.017 kA/div</div><div class="r r2">-Intg(Ch3&#8230;</div></div>

<div class="abs btn tall" style="left:1023px"><div class="ln" style="background:#f7931e"></div><div style="font-size:19px;line-height:22px;margin-top:32px">5</div></div>
<div class="abs btn tall" style="left:1068px"><div class="ln" style="background:#2424c8"></div><div style="font-size:19px;line-height:22px;margin-top:32px">6</div></div>
<div class="abs vsep" style="left:1118px;top:1000px;height:78px"></div>
<div class="abs btn tall" style="left:1129px"><div class="ln" style="background:#b51f24"></div><div style="font-size:14.5px;line-height:16px;margin-top:20px">Add<br>New<br>Math</div></div>
<div class="abs btn tall" style="left:1174px"><div class="ln" style="background:#c4c8dc"></div><div style="font-size:14.5px;line-height:16px;margin-top:20px">Add<br>New<br>Ref</div></div>
<div class="abs btn tall" style="left:1219px"><div class="ln" style="background:#c04df0"></div><div style="font-size:14.5px;line-height:16px;margin-top:20px">Add<br>New<br>Bus</div></div>
<div class="abs vsep" style="left:1269px;top:1000px;height:78px"></div>

<div class="abs info" style="left:1280px;width:200px"><div class="hd">Horizontal</div>
<div class="r i1" style="left:4px">4.5 ms/div</div><div class="r i1" style="left:110px">45 ms</div>
<div class="r i2" style="left:4px;letter-spacing:-.4px">SR: 1 MS/s</div><div class="r i2" style="left:110px">1 &#181;s/pt</div>
<div class="r i3" style="left:4px">RL: 45 kpts</div><div class="r i3" style="left:125px">3%</div>
<svg style="position:absolute;left:109px;top:58px" width="12" height="16" viewBox="0 0 12 16"><path d="M1.7 1.7H9.3V9.2H7.2L5.5 12.6L3.8 9.2H1.7Z" fill="#000" stroke="#f7931e" stroke-width="1.3"/><path d="M3.6 3.9H7.4M5.5 3.9V7.6" stroke="#fff" stroke-width="1.2" fill="none"/></svg>
</div>
<div class="abs info" style="left:1485px;width:160px"><div class="hd">Trigger</div>
<div class="abs" style="left:4px;top:21px;width:30px;height:16px;box-sizing:border-box;border:1px solid #0a0a0a;border-radius:5px;background:#2424b8;color:#fff;text-align:center;line-height:13px;font-size:14px">6</div>
<svg style="position:absolute;left:43px;top:21px" width="20" height="14" viewBox="0 0 20 14"><path d="M1.5 11.5H5.5L12 2.5H16.5" stroke="#30308a" stroke-width="1.1" fill="none"/></svg>
<div class="r i1" style="left:70px">3 V</div>
</div>
<div class="abs info" style="left:1650px;width:150px"><div class="hd">Acquisition</div>
<div class="r i1" style="left:4px">Manual,</div><div class="r i1" style="left:85px">Analyze</div>
<div class="r i2" style="left:4px">High Res: 16 bits</div>
<div class="r i3" style="left:4px">Single: 0 /1</div>
</div>
<div class="abs vsep" style="left:1811px;top:1000px;height:78px"></div>
<div class="abs" style="left:1822px;top:999px;width:90px;height:36px;box-sizing:border-box;border:1px solid #7a4a4a;border-radius:7px;background:#ff1d25;color:#fff;text-align:center;font-weight:bold;font-size:13.5px;line-height:31px;letter-spacing:.2px;-webkit-text-stroke:.5px">Preview</div>
<div class="abs" style="left:1822px;top:1040px;width:90px;height:38px;border-radius:5px;background:#c8c8c8;color:#101010;text-align:center;font-size:14.6px;line-height:17.4px;padding-top:2px;box-sizing:border-box">20 May 2025<br>6:09:56 PM</div>

</div>
</body></html>
